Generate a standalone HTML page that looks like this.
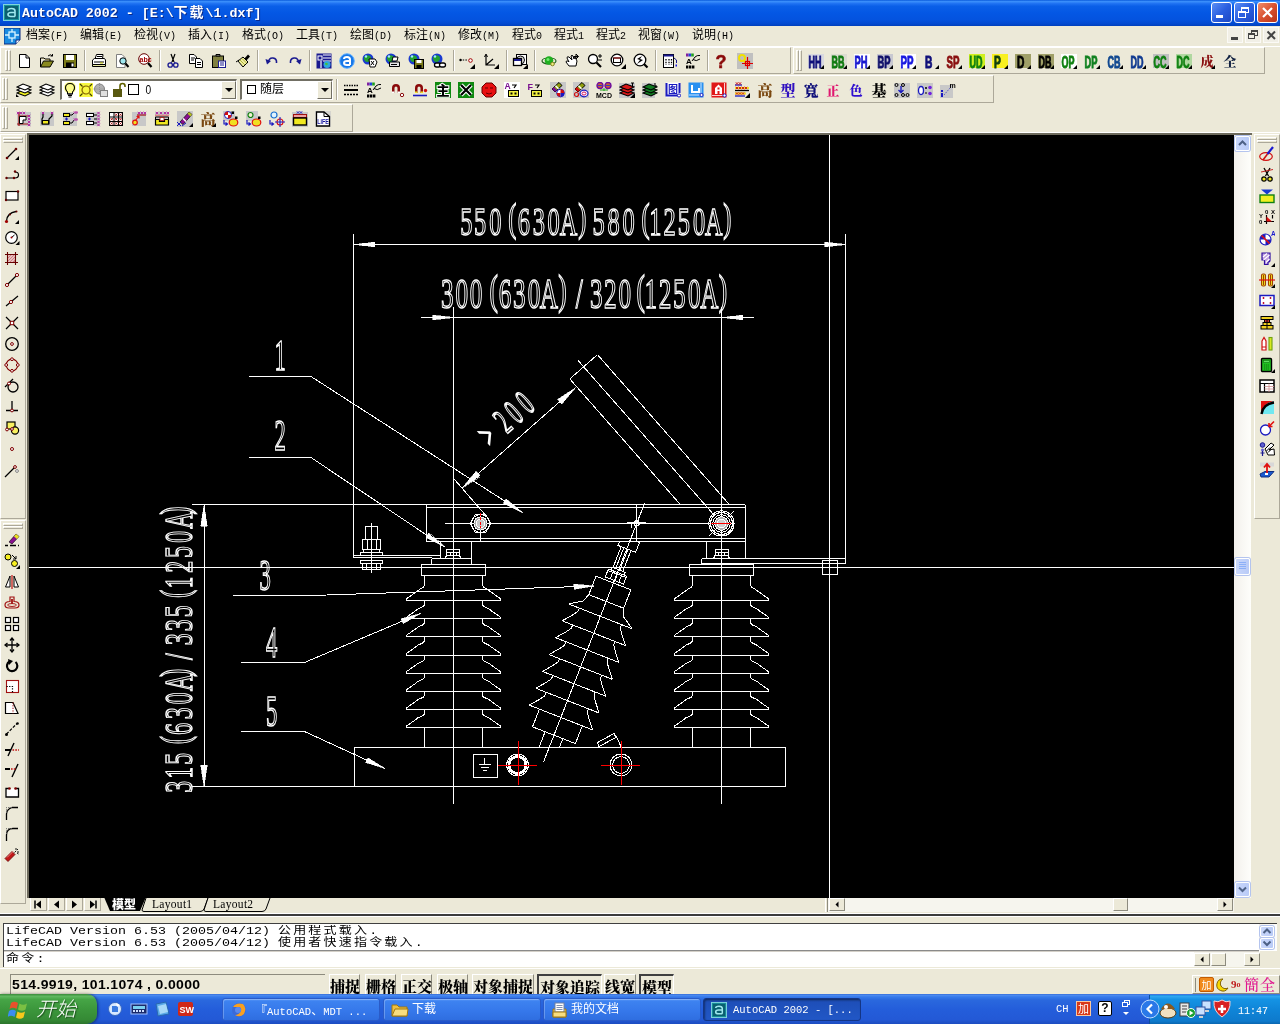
<!DOCTYPE html>
<html lang="zh"><head><meta charset="utf-8"><title>AutoCAD 2002</title><style>
html,body{margin:0;padding:0;width:1280px;height:1024px;overflow:hidden;background:#ece9d8;
 font-family:"Liberation Sans","Noto Sans CJK SC",sans-serif;font-size:12px;color:#000}
.abs{position:absolute}
#title{left:0;top:0;width:1280px;height:26px;
 background:linear-gradient(to bottom,#0a5bdc 0%,#3b8ffb 6%,#1e71f2 14%,#0a5fe8 24%,#0457e4 50%,#0453df 75%,#0349cf 92%,#0140bb 100%)}
#title .t{left:22px;top:6px;color:#fff;font-family:"Liberation Mono","Noto Sans CJK SC",monospace;font-weight:bold;font-size:13.3px;white-space:pre;line-height:16px;letter-spacing:0px;text-shadow:1px 1px 0 #0a2a8a}
#title .t b{font-size:14px;letter-spacing:2px;font-weight:bold;line-height:14px}
.wb{top:2px;width:21px;height:21px;border-radius:3px;border:1px solid #fff;box-sizing:border-box;
 background:linear-gradient(135deg,#5c8ff5 0%,#2a5fe0 50%,#1c47c4 100%)}
.wb.x{background:linear-gradient(135deg,#ee8c6a 0%,#d9512f 50%,#b8341a 100%)}
#menu{left:0;top:26px;width:1280px;height:20px;background:#ece9d8}
#menu span{position:absolute;top:3px;font-size:12px;line-height:14px;white-space:pre;font-family:"Liberation Mono","Noto Sans CJK SC",monospace}
#menu span i{font-style:normal;font-size:10px;letter-spacing:0px}
.tbar{background:#ece9d8;border-top:1px solid #fff;border-left:1px solid #fff;border-bottom:1px solid #aca899;border-right:1px solid #aca899;box-sizing:border-box}
.grip{width:3px;border-left:1px solid #fff;border-top:1px solid #fff;border-right:1px solid #aca899;border-bottom:1px solid #aca899;box-sizing:border-box}
.gripH{height:3px;border-left:1px solid #fff;border-top:1px solid #fff;border-right:1px solid #aca899;border-bottom:1px solid #aca899;box-sizing:border-box}
.sep{width:2px;border-left:1px solid #aca899;border-right:1px solid #fff;box-sizing:border-box}
.combo{background:#fff;border:1px solid #7f9db9;box-sizing:border-box;border-top:2px solid #716f64;border-left:2px solid #716f64;border-right:1px solid #fff;border-bottom:1px solid #fff}
.ddb{background:#ece9d8;border-top:1px solid #fff;border-left:1px solid #fff;border-right:1px solid #716f64;border-bottom:1px solid #716f64;box-sizing:border-box}
.ddb:after{content:"";position:absolute;left:3px;top:6px;border-left:4px solid transparent;border-right:4px solid transparent;border-top:4px solid #000}
.sbtn{background:linear-gradient(to right,#c9d7fb,#b9cbf7);border:1px solid #fff;border-radius:2px;box-sizing:border-box;box-shadow:0 0 0 1px #b4c4ee}
.strack{background:linear-gradient(to right,#f3f1ec,#fefefb)}
.stracky{background:#f6f5ee}
#cmd{left:3px;top:923px;width:1274px;height:44px;background:#fff;border-top:1px solid #404040;border-left:1px solid #404040;box-sizing:border-box}
.mono{font-family:"Liberation Mono","Noto Sans CJK SC",monospace;font-size:13.33px;white-space:pre;line-height:14px;height:14px;transform-origin:0 0;transform:scaleY(0.84)}
.mono b{font-weight:normal;font-size:13px;letter-spacing:2.2px;line-height:10px}
.stb{top:974px;height:22px;box-sizing:border-box;font-family:"Noto Serif CJK SC","Noto Sans CJK SC",serif;font-weight:900;font-size:15px;line-height:22px;text-align:center;white-space:nowrap;
 border-top:1px solid #fff;border-left:1px solid #fff;border-right:1px solid #8d8b7e;border-bottom:1px solid #8d8b7e;padding-top:0px;letter-spacing:0px}
.stb.dn{border-top:2px solid #404040;border-left:2px solid #404040;border-right:1px solid #fff;border-bottom:1px solid #fff}
#task{left:0;top:994px;width:1280px;height:30px;
 background:linear-gradient(to bottom,#3168d5 0%,#4e8cf0 4%,#3579ea 10%,#2a68de 20%,#245edb 50%,#2359d6 85%,#1c4cc0 100%)}
#start{left:0;top:0;width:97px;height:30px;border-radius:0 10px 10px 0;
 background:linear-gradient(to bottom,#3a8a3a 0%,#5fb85f 8%,#46a546 18%,#3c973c 50%,#358a35 85%,#2c742c 100%);box-shadow:1px 0 3px rgba(0,0,0,.5)}
#start span{position:absolute;left:36px;top:1px;color:#fff;font-size:20px;font-style:italic;font-family:"Noto Sans CJK SC",sans-serif;font-weight:300;line-height:26px;text-shadow:1px 1px 1px #1d4d1d;letter-spacing:0px}
.tk{top:4px;height:23px;border-radius:3px;box-sizing:border-box;color:#fff;font-size:12px;line-height:22px;white-space:pre;
 background:linear-gradient(to bottom,#5a97f6 0%,#3d82f0 12%,#3577ea 60%,#2f6ee0 100%);border:1px solid #2a5bc8;box-shadow:inset 1px 1px 0 rgba(255,255,255,.25)}
.tk.act{background:linear-gradient(to bottom,#1b459f 0%,#1e4fb9 15%,#2157c6 100%);border:1px solid #143585;box-shadow:inset 1px 1px 2px rgba(0,0,0,.4)}
.tk span{position:absolute;top:0;font-family:"Liberation Mono","Noto Sans CJK SC",monospace;font-size:12px}
.tk span i{font-style:normal;font-size:10.5px;}
#tray{left:1149px;top:1px;width:131px;height:29px;background:linear-gradient(to bottom,#1a8fe0 0%,#2ea5f0 5%,#1593e4 15%,#0f85d8 50%,#0e7acc 90%,#0a66b0 100%);border-left:1px solid #0a4fa0;box-sizing:border-box}
</style></head><body>
<div id="root" style="position:absolute;left:0;top:0;width:1280px;height:1024px;overflow:hidden;will-change:transform">
<div id="title" class="abs"><svg class="abs" style="left:3px;top:4px" width="17" height="17" viewBox="0 0 17 17"><rect x="0.5" y="0.5" width="16" height="16" fill="#18939c" stroke="#7fd4dc"/><rect x="2" y="2" width="13" height="13" fill="#0a5f70"/><path d="M5 6.5 Q5 4.5 8.5 4.5 Q12 4.5 12 7 V12.5 M12 8.5 H8 Q5 8.5 5 10.5 Q5 12.5 8 12.5 H12" fill="none" stroke="#9fe8ee" stroke-width="1.6"/></svg><div class="abs t">AutoCAD 2002 - [E:\<b>下载</b>\1.dxf]</div><div class="abs wb" style="left:1211px"><div class="abs" style="left:4px;top:12px;width:7px;height:3px;background:#fff"></div></div><div class="abs wb" style="left:1234px"><div class="abs" style="left:6px;top:4px;width:8px;height:6px;border:1px solid #fff;border-top:2px solid #fff;box-sizing:border-box"></div><div class="abs" style="left:3px;top:8px;width:8px;height:7px;border:1px solid #fff;border-top:2px solid #fff;box-sizing:border-box;background:#2a5fe0"></div></div><div class="abs wb x" style="left:1257px"><svg class="abs" style="left:3px;top:3px" width="13" height="13"><path d="M2 2 L11 11 M11 2 L2 11" stroke="#fff" stroke-width="2.2"/></svg></div></div><div id="menu" class="abs"><svg class="abs" style="left:4px;top:2px" width="17" height="17" viewBox="0 0 17 17"><path d="M0 0 H16 V12 L12 16 H0 Z" fill="#1a8be0" stroke="#0a2a80" stroke-width="1"/><path d="M12 16 V12 H16" fill="#fff" stroke="#0a2a80"/><rect x="5" y="4" width="6" height="6" fill="none" stroke="#d8f4ff" stroke-width="1.3"/><path d="M8 1 V4 M8 10 V14 M1 7 H5 M11 7 H15" stroke="#d8f4ff" stroke-width="1.3"/></svg><span style="left:26px">档案<i>(F)</i></span><span style="left:80px">编辑<i>(E)</i></span><span style="left:134px">检视<i>(V)</i></span><span style="left:188px">插入<i>(I)</i></span><span style="left:242px">格式<i>(O)</i></span><span style="left:296px">工具<i>(T)</i></span><span style="left:350px">绘图<i>(D)</i></span><span style="left:404px">标注<i>(N)</i></span><span style="left:458px">修改<i>(M)</i></span><span style="left:512px">程式<i>0</i></span><span style="left:554px">程式<i>1</i></span><span style="left:596px">程式<i>2</i></span><span style="left:638px">视窗<i>(W)</i></span><span style="left:692px">说明<i>(H)</i></span><div class="abs" style="left:1227px;top:1px;width:16px;height:16px;background:#f1efe6;border:1px solid #fbfaf6;box-sizing:border-box"></div><div class="abs" style="left:1245px;top:1px;width:16px;height:16px;background:#f1efe6;border:1px solid #fbfaf6;box-sizing:border-box"></div><div class="abs" style="left:1263px;top:1px;width:16px;height:16px;background:#f1efe6;border:1px solid #fbfaf6;box-sizing:border-box"></div><div class="abs" style="left:1231px;top:11px;width:7px;height:3px;background:#444"></div><div class="abs" style="left:1251px;top:4px;width:7px;height:6px;border:1px solid #444;border-top:2px solid #444;box-sizing:border-box"></div><div class="abs" style="left:1248px;top:7px;width:7px;height:6px;border:1px solid #444;border-top:2px solid #444;box-sizing:border-box;background:#f1efe6"></div><svg class="abs" style="left:1266px;top:4px" width="11" height="11"><path d="M1.5 1.5 L9 9 M9 1.5 L1.5 9" stroke="#444" stroke-width="2"/></svg></div><div class="abs" style="left:0;top:46px;width:1280px;height:1px;background:#fff"></div><div class="abs tbar" style="left:0;top:47px;width:791px;height:27px"></div><div class="abs grip" style="left:5px;top:50px;height:21px"></div><div class="abs grip" style="left:8px;top:50px;height:21px"></div><div class="abs tbar" style="left:793px;top:47px;width:472px;height:27px"></div><div class="abs grip" style="left:796px;top:50px;height:21px"></div><div class="abs grip" style="left:799px;top:50px;height:21px"></div><div class="abs tbar" style="left:0;top:75px;width:994px;height:28px"></div><div class="abs grip" style="left:2px;top:78px;height:22px"></div><div class="abs grip" style="left:5px;top:78px;height:22px"></div><div class="abs tbar" style="left:0;top:104px;width:353px;height:28px"></div><div class="abs grip" style="left:2px;top:107px;height:22px"></div><div class="abs grip" style="left:5px;top:107px;height:22px"></div><div class="abs sep" style="left:84px;top:50px;height:21px"></div><div class="abs sep" style="left:159px;top:50px;height:21px"></div><div class="abs sep" style="left:257px;top:50px;height:21px"></div><div class="abs sep" style="left:309px;top:50px;height:21px"></div><div class="abs sep" style="left:453px;top:50px;height:21px"></div><div class="abs sep" style="left:506px;top:50px;height:21px"></div><div class="abs sep" style="left:534px;top:50px;height:21px"></div><div class="abs sep" style="left:655px;top:50px;height:21px"></div><div class="abs sep" style="left:707px;top:50px;height:21px"></div><div class="abs sep" style="left:336px;top:79px;height:21px"></div><div class="abs combo" style="left:60px;top:79px;width:177px;height:21px"><div class="abs ddb" style="left:159px;top:0;width:15px;height:18px"></div><div class="abs" style="left:83px;top:1px;line-height:16px;font-family:'Liberation Sans',sans-serif;font-size:12px;transform:scaleX(0.85)">0</div></div><div class="abs combo" style="left:240px;top:79px;width:93px;height:21px"><div class="abs ddb" style="left:75px;top:0;width:15px;height:18px"></div><div class="abs" style="left:5px;top:4px;width:9px;height:9px;border:1px solid #000;box-sizing:border-box"></div><div class="abs" style="left:18px;top:0px;font-size:12px;line-height:17px">随层</div></div><div class="abs" style="left:0;top:132px;width:1280px;height:1px;background:#fff"></div><div class="abs" style="left:27px;top:133px;width:1225px;height:2px;background:#6d6a5c"></div><div class="abs tbar" style="left:0;top:134px;width:26px;height:385px"></div><div class="abs gripH" style="left:3px;top:137px;width:20px"></div><div class="abs gripH" style="left:3px;top:140px;width:20px"></div><div class="abs tbar" style="left:0;top:520px;width:26px;height:384px"></div><div class="abs gripH" style="left:3px;top:523px;width:20px"></div><div class="abs gripH" style="left:3px;top:526px;width:20px"></div><div class="abs" style="left:27px;top:134px;width:2px;height:764px;background:#6d6a5c"></div><div class="abs tbar" style="left:1254px;top:134px;width:26px;height:385px"></div><div class="abs gripH" style="left:1257px;top:137px;width:20px"></div><div class="abs gripH" style="left:1257px;top:140px;width:20px"></div><div class="abs strack" style="left:1234px;top:135px;width:17px;height:763px"></div><div class="abs sbtn" style="left:1235px;top:136px;width:15px;height:15px"><svg class="abs" style="left:-1px;top:-1px" width="15" height="15"><path d="M4.0 9.0 L7.5 5.5 L11.0 9.0" fill="none" stroke="#4d6185" stroke-width="2"/></svg></div><div class="abs sbtn" style="left:1235px;top:882px;width:15px;height:15px"><svg class="abs" style="left:-1px;top:-1px" width="15" height="15"><path d="M4.0 5.5 L7.5 9.0 L11.0 5.5" fill="none" stroke="#4d6185" stroke-width="2"/></svg></div><div class="abs sbtn" style="left:1235px;top:558px;width:15px;height:17px"></div><div class="abs" style="left:1239px;top:562px;width:7px;height:1px;background:#eef4fe;border-bottom:1px solid #8cb0f8;box-sizing:content-box;height:0"></div><div class="abs" style="left:1239px;top:564px;width:7px;height:1px;background:#eef4fe;border-bottom:1px solid #8cb0f8;box-sizing:content-box;height:0"></div><div class="abs" style="left:1239px;top:566px;width:7px;height:1px;background:#eef4fe;border-bottom:1px solid #8cb0f8;box-sizing:content-box;height:0"></div><div class="abs" style="left:1239px;top:568px;width:7px;height:1px;background:#eef4fe;border-bottom:1px solid #8cb0f8;box-sizing:content-box;height:0"></div><div class="abs" style="left:29px;top:898px;width:1222px;height:14px;background:#ece9d8"></div><div class="abs" style="left:30px;top:898px;width:17px;height:13px;border-right:1px solid #aca899;border-bottom:1px solid #aca899;border-left:1px solid #fff;box-sizing:border-box"></div><svg class="abs" style="left:30px;top:898px" width="17" height="13"><path d="M5 2.5 V10.5" stroke="#000" stroke-width="1.5"/><path d="M11 2.5 V10.5 L6 6.5 Z" fill="#000"/></svg><div class="abs" style="left:48px;top:898px;width:17px;height:13px;border-right:1px solid #aca899;border-bottom:1px solid #aca899;border-left:1px solid #fff;box-sizing:border-box"></div><svg class="abs" style="left:48px;top:898px" width="17" height="13"><path d="M11 2.5 V10.5 L6 6.5 Z" fill="#000"/></svg><div class="abs" style="left:66px;top:898px;width:17px;height:13px;border-right:1px solid #aca899;border-bottom:1px solid #aca899;border-left:1px solid #fff;box-sizing:border-box"></div><svg class="abs" style="left:66px;top:898px" width="17" height="13"><path d="M6 2.5 V10.5 L11 6.5 Z" fill="#000"/></svg><div class="abs" style="left:84px;top:898px;width:17px;height:13px;border-right:1px solid #aca899;border-bottom:1px solid #aca899;border-left:1px solid #fff;box-sizing:border-box"></div><svg class="abs" style="left:84px;top:898px" width="17" height="13"><path d="M12 2.5 V10.5" stroke="#000" stroke-width="1.5"/><path d="M6 2.5 V10.5 L11 6.5 Z" fill="#000"/></svg><svg class="abs" style="left:100px;top:897px" width="180" height="16" viewBox="0 0 180 16"><path d="M4 0 L10 14 H40 L46 0 Z" fill="#000"/><path d="M46 1 L42 13 Q42 14.5 44 14.5 H100 Q103 14.5 104 12 L108 1" fill="#ece9d8" stroke="#000" stroke-width="1"/><path d="M108 1 L104 13 Q104 14.5 106 14.5 H162 Q165 14.5 166 12 L170 1" fill="#ece9d8" stroke="#000" stroke-width="1"/><text x="12" y="12" font-family="Noto Sans CJK SC,sans-serif" font-weight="900" font-size="12" fill="#fff">模型</text><text x="52" y="11" font-family="Liberation Serif,serif" font-size="11.5" fill="#000" letter-spacing="0.3">Layout1</text><text x="113" y="11" font-family="Liberation Serif,serif" font-size="11.5" fill="#000" letter-spacing="0.3">Layout2</text></svg><div class="abs stracky" style="left:825px;top:897px;width:409px;height:15px"></div><div class="abs" style="left:825px;top:897px;width:3px;height:15px;background:#ece9d8;border-left:1px solid #fff;border-right:1px solid #8d8b7e;box-sizing:border-box"></div><div class="abs" style="left:829px;top:898px;width:16px;height:13px;background:#ece9d8;border:1px solid #fff;border-right-color:#8d8b7e;border-bottom-color:#8d8b7e;box-sizing:border-box"><svg class="abs" style="left:-1px;top:-1px" width="16" height="13"><path d="M9.5 3.5 L6.5 6.5 L9.5 9.5Z" fill="#000"/></svg></div><div class="abs" style="left:1217px;top:898px;width:16px;height:13px;background:#ece9d8;border:1px solid #fff;border-right-color:#8d8b7e;border-bottom-color:#8d8b7e;box-sizing:border-box"><svg class="abs" style="left:-1px;top:-1px" width="16" height="13"><path d="M6.5 3.5 L9.5 6.5 L6.5 9.5Z" fill="#000"/></svg></div><div class="abs" style="left:1113px;top:898px;width:15px;height:13px;background:#ece9d8;border:1px solid #fff;border-right-color:#8d8b7e;border-bottom-color:#8d8b7e;box-sizing:border-box"></div><div class="abs" style="left:0;top:913px;width:1280px;height:1px;background:#fff"></div><div class="abs" style="left:0;top:914px;width:1280px;height:2px;background:#3c3c3c"></div><div class="abs" style="left:0;top:916px;width:1280px;height:1px;background:#fff"></div><div id="cmd" class="abs"><div class="abs mono" style="left:2px;top:2px">LifeCAD Version 6.53 (2005/04/12) <b>公用程式载入</b>.</div><div class="abs mono" style="left:2px;top:14px">LifeCAD Version 6.53 (2005/04/12) <b>使用者快速指令载入</b>.</div><div class="abs" style="left:0;top:26px;width:1255px;height:1px;background:#8a8a8a"></div><div class="abs" style="left:0;top:27px;width:1255px;height:1px;background:#d4d0c8"></div><div class="abs mono" style="left:2px;top:30px"><b>命令</b>:</div><div class="abs strack" style="left:1255px;top:0;width:18px;height:26px"></div><div class="abs sbtn" style="left:1256px;top:2px;width:14px;height:11px"><svg class="abs" style="left:-1px;top:-1px" width="14" height="11"><path d="M3.5 7.0 L7.0 3.5 L10.5 7.0" fill="none" stroke="#4d6185" stroke-width="2"/></svg></div><div class="abs sbtn" style="left:1256px;top:14px;width:14px;height:11px"><svg class="abs" style="left:-1px;top:-1px" width="14" height="11"><path d="M3.5 3.5 L7.0 7.0 L10.5 3.5" fill="none" stroke="#4d6185" stroke-width="2"/></svg></div><div class="abs stracky" style="left:1190px;top:28px;width:66px;height:15px"></div><div class="abs" style="left:1190px;top:29px;width:16px;height:13px;background:#ece9d8;border:1px solid #fff;border-right-color:#8d8b7e;border-bottom-color:#8d8b7e;box-sizing:border-box"><svg class="abs" style="left:-1px;top:-1px" width="16" height="13"><path d="M9.5 3.5 L6.5 6.5 L9.5 9.5Z" fill="#000"/></svg></div><div class="abs" style="left:1240px;top:29px;width:16px;height:13px;background:#ece9d8;border:1px solid #fff;border-right-color:#8d8b7e;border-bottom-color:#8d8b7e;box-sizing:border-box"><svg class="abs" style="left:-1px;top:-1px" width="16" height="13"><path d="M6.5 3.5 L9.5 6.5 L6.5 9.5Z" fill="#000"/></svg></div><div class="abs" style="left:1207px;top:29px;width:15px;height:13px;background:#ece9d8;border:1px solid #fff;border-right-color:#8d8b7e;border-bottom-color:#8d8b7e;box-sizing:border-box"></div><div class="abs" style="left:1256px;top:27px;width:18px;height:17px;background:#ece9d8"></div></div><div class="abs" style="left:0;top:968px;width:1280px;height:1px;background:#fff"></div><div class="abs" style="left:10px;top:974px;width:315px;height:22px;border-top:1px solid #8d8b7e;border-left:1px solid #8d8b7e;box-sizing:border-box"></div><div class="abs" style="left:12px;top:978px;font-family:'Liberation Sans',sans-serif;font-weight:bold;font-size:14px;line-height:15px;white-space:pre;letter-spacing:0.35px;transform-origin:0 0;transform:scaleY(0.93)">514.9919, 101.1074 , 0.0000</div><div class="abs stb" style="left:329px;width:31px">捕捉</div><div class="abs stb" style="left:365px;width:31px">栅格</div><div class="abs stb" style="left:401px;width:31px">正交</div><div class="abs stb" style="left:437px;width:31px">极轴</div><div class="abs stb" style="left:472px;width:62px">对象捕捉</div><div class="abs stb dn" style="left:537px;width:65px">对象追踪</div><div class="abs stb" style="left:604px;width:32px">线宽</div><div class="abs stb dn" style="left:639px;width:35px">模型</div><div class="abs" style="left:1192px;top:975px;width:88px;height:19px;border:1px solid #8d8b7e;border-top-color:#fff;border-left-color:#fff;box-sizing:border-box;background:#ece9d8"></div><div class="abs" style="left:1195px;top:978px;width:1px;height:14px;background:#8d8b7e"></div><div class="abs" style="left:1199px;top:977px;width:15px;height:15px;background:#f08a1c;border:1px solid #c45a00;box-sizing:border-box;border-radius:2px;color:#fff;font-size:10px;line-height:13px;text-align:center;font-family:'Noto Sans CJK SC',sans-serif">加</div><svg class="abs" style="left:1214px;top:977px" width="16" height="16"><path d="M9 2 A6 6 0 1 0 14 11 A5 5 0 0 1 9 2 Z" fill="#f8d800" stroke="#806000" stroke-width="1"/></svg><div class="abs" style="left:1231px;top:977px;font-size:11px;line-height:15px;color:#c02020;font-family:'Liberation Serif',serif;font-weight:bold">9<span style="font-size:8px;vertical-align:1px">o</span></div><div class="abs" style="left:1244px;top:975px;font-size:15px;line-height:18px;color:#e01890;font-family:'Noto Serif CJK TC','Noto Serif CJK SC',serif;font-weight:500;white-space:nowrap;letter-spacing:1px">簡全</div><div id="task" class="abs"><div id="start" class="abs"><svg class="abs" style="left:8px;top:5px" width="24" height="22" viewBox="0 0 24 22"><path d="M3 4 Q6 1.5 10 4 L8.5 10 Q5 7.5 1.5 10 Z" fill="#e8502c"/><path d="M11.5 4.5 Q15 7 19 4.5 L17.5 10.5 Q14 13 10 10.5 Z" fill="#7bc043"/><path d="M1 12 Q4.5 9.5 8 12 L6.5 18 Q3 15.5 -0.5 18 Z" fill="#3c8df0"/><path d="M9.5 12.5 Q13 15 17 12.5 L15.5 18.5 Q12 21 8 18.5 Z" fill="#f8c81c"/></svg><span>开始</span></div><svg class="abs" style="left:106px;top:6px" width="100" height="18" viewBox="0 0 100 18"><circle cx="9" cy="9" r="6.5" fill="#d8e8ff" stroke="#3a6ac0"/><path d="M6 6 H12 V12 H6 Z" fill="#3a7ae0"/><path d="M10 3 L14 5 L11 7" fill="#fff"/><rect x="25" y="4" width="16" height="10" fill="#1a2a6a" stroke="#a0c0ff"/><rect x="27" y="6" width="12" height="3" fill="#7ad0f0"/><path d="M27 11 H39" stroke="#d0e0ff" stroke-width="2" stroke-dasharray="2 1"/><path d="M50 4 L60 2 L63 14 L52 16 Z" fill="#58a8e8" stroke="#2a68b0"/><path d="M52 6 L60 4 L62 12 L54 14Z" fill="#a8d8f8"/><rect x="72" y="2" width="15" height="14" rx="2" fill="#d02818"/><text x="73.5" y="13" font-size="9" font-weight="bold" fill="#fff" font-family="Liberation Sans,sans-serif">SW</text></svg><div class="abs tk" style="left:222px;width:158px"><svg class="abs" style="left:7px;top:2px" width="18" height="18"><circle cx="9" cy="9" r="7" fill="#3a6ad8"/><path d="M3 6 Q6 1 13 3 Q17 7 14 13 Q10 17 5 14 Q9 14 11 10 Q12 6 8 6 Q5 6 3 6Z" fill="#f8a020"/><circle cx="8" cy="9" r="3" fill="#5a8af0"/></svg><span style="left:32px"><span style="position:static;font-family:'Noto Sans CJK SC'">『</span><i>AutoCAD</i>、<i>MDT ...</i></span></div><div class="abs tk" style="left:383px;width:158px"><svg class="abs" style="left:7px;top:3px" width="18" height="16"><path d="M1 3 H6 L8 5 H16 V14 H1 Z" fill="#f0c040" stroke="#a07810"/><path d="M1 14 L4 7 H17 L16 14 Z" fill="#f8de80" stroke="#a07810"/></svg><span style="left:28px">下载</span></div><div class="abs tk" style="left:543px;width:158px"><svg class="abs" style="left:7px;top:2px" width="18" height="18"><path d="M2 8 H15 V16 H2 Z" fill="#f0c850" stroke="#a07810"/><rect x="4" y="2" width="9" height="9" fill="#fff" stroke="#7080a0"/><path d="M5.5 4.5 H11.5 M5.5 6.5 H11.5 M5.5 8.5 H11.5" stroke="#8090b0"/><path d="M2 11 H15 V16 H2Z" fill="#f8de80" stroke="#a07810"/></svg><span style="left:27px">我的文档</span></div><div class="abs tk act" style="left:703px;width:158px"><svg class="abs" style="left:7px;top:3px" width="16" height="16" viewBox="0 0 17 17"><rect x="0.5" y="0.5" width="16" height="16" fill="#18939c" stroke="#7fd4dc"/><rect x="2" y="2" width="13" height="13" fill="#0a5f70"/><path d="M5 6.5 Q5 4.5 8.5 4.5 Q12 4.5 12 7 V12.5 M12 8.5 H8 Q5 8.5 5 10.5 Q5 12.5 8 12.5 H12" fill="none" stroke="#9fe8ee" stroke-width="1.6"/></svg><span style="left:29px"><i>AutoCAD 2002 - [...</i></span></div><div class="abs" style="left:1056px;top:8px;color:#fff;font-family:'Liberation Mono',monospace;font-size:10.5px;line-height:14px">CH</div><div class="abs" style="left:1076px;top:7px;width:15px;height:15px;background:#d83818;border:1px solid #f8c8a0;box-sizing:border-box;color:#fff;font-size:11px;line-height:13px;text-align:center;font-family:'Noto Sans CJK SC',sans-serif">加</div><div class="abs" style="left:1098px;top:7px;width:14px;height:15px;background:#fff;border:1px solid #000;box-sizing:border-box;border-radius:2px;color:#000;font-size:12px;line-height:13px;text-align:center;font-weight:bold">?</div><svg class="abs" style="left:1120px;top:5px" width="12" height="20"><rect x="4.5" y="1.5" width="5" height="4" fill="none" stroke="#fff"/><rect x="2.5" y="3.5" width="5" height="4" fill="#245edb" stroke="#fff"/><path d="M3 13 H9 L6 16 Z" fill="#fff"/></svg><div id="tray" class="abs"><svg class="abs" style="left:-6px;top:0;overflow:visible" width="137" height="29"><circle cx="6" cy="14" r="9" fill="#2a78e8" stroke="#bcdcff"/><path d="M8 9.5 L3.5 14 L8 18.5" fill="none" stroke="#fff" stroke-width="2.2"/><ellipse cx="24" cy="18" rx="8" ry="5" fill="#f0e0c0" stroke="#5a3a10"/><path d="M17 14 Q24 3 31 14 Z" fill="#8a5a20"/><circle cx="22" cy="12" r="2" fill="#fff"/><rect x="36" y="8" width="9" height="13" fill="#e8e8e8" stroke="#404040"/><path d="M38 11 H43 M38 14 H43 M38 17 H43" stroke="#404040"/><circle cx="47" cy="18" r="4.5" fill="#18a030" stroke="#fff"/><path d="M45.5 15.5 L49.5 18 L45.5 20.5Z" fill="#fff"/><rect x="58" y="6" width="9" height="8" fill="#c8e0ff" stroke="#3050a0"/><rect x="52" y="12" width="9" height="8" fill="#c8e0ff" stroke="#3050a0"/><path d="M55 22 H59 M61 16 H65" stroke="#d0d0d0" stroke-width="2"/><path d="M78 5 Q82 8 86 6 Q87 16 78 22 Q69 16 70 6 Q74 8 78 5Z" fill="#d82020" stroke="#f8d0d0"/><path d="M78 10 V18 M74 14 H82" stroke="#fff" stroke-width="2.5"/><text x="94" y="19" font-family="Liberation Mono,monospace" font-size="10" fill="#fff">11:47</text></svg></div></div>
<svg class="abs" id="dwg" style="left:29px;top:135px;background:#000;will-change:transform" width="1205" height="763" viewBox="29 135 1205 763" shape-rendering="auto"><defs><clipPath id="cpBelowFrame"><rect x="500" y="541.5" width="300" height="100"/></clipPath><clipPath id="cpAbovePlate"><rect x="400" y="600" width="300" height="147"/></clipPath></defs><g stroke-linecap="butt" stroke-linejoin="miter" shape-rendering="crispEdges"><path d="M29 567.5 L1234 567.5" stroke="#fff" stroke-width="1" fill="none"/><path d="M829.5 135 L829.5 898" stroke="#fff" stroke-width="1" fill="none"/><path d="M822.5 560.5 L837 560.5 L837 574.5 L822.5 574.5 Z" stroke="#fff" stroke-width="1" fill="none"/><path d="M353.5 234 L353.5 557.5" stroke="#fff" stroke-width="1" fill="none"/><path d="M845.5 234 L845.5 563.5" stroke="#fff" stroke-width="1" fill="none"/><path d="M353.5 244.5 L845.5 244.5" stroke="#fff" stroke-width="1" fill="none"/><path d="M353.5 244.5 L374.5 242.1 L374.5 246.9 Z" stroke="#fff" stroke-width="0.6" fill="#fff"/><path d="M845.5 244.5 L824.5 246.9 L824.5 242.1 Z" stroke="#fff" stroke-width="0.6" fill="#fff"/><text transform="translate(460 235) scale(0.6 1)" x="0.3 23.46 48.93 80.5 96.25 121.17 145.77 166.45 197.07 209.25 220.96 245.85 270.77 302.33 315.53 339.24 362.8 388.27 408.28 438.9" y="0 0 0 -4.06 0 0 0 0 -4.06 0 0 0 0 -4.06 0 0 0 0 0 -4.06" font-family="Liberation Serif,serif" font-size="40.6" fill="none" stroke="#fff" stroke-width="1.15" style="vector-effect:non-scaling-stroke" vector-effect="non-scaling-stroke">550(630A) 580(1250A)</text><path d="M453.5 306.5 L453.5 804" stroke="#fff" stroke-width="1" fill="none"/><path d="M721.5 306.5 L721.5 804" stroke="#fff" stroke-width="1" fill="none"/><path d="M421 317.5 L754 317.5" stroke="#fff" stroke-width="1" fill="none"/><path d="M453.5 317.5 L432.5 319.9 L432.5 315.1 Z" stroke="#fff" stroke-width="0.6" fill="#fff"/><path d="M721.5 317.5 L742.5 315.1 L742.5 319.9 Z" stroke="#fff" stroke-width="0.6" fill="#fff"/><text transform="translate(440.5 308) scale(0.6 1)" x="0.81 24.92 48.58 81.59 97.06 120.81 145.42 165.28 196.18 225.41 248.98 272.56 296.75 326.59 340.16 363.9 387.43 412.42 432.78 463.68" y="0 0 0 -4.2 0 0 0 0 -4.2 0 0 0 0 -4.2 0 0 0 0 0 -4.2" font-family="Liberation Serif,serif" font-size="42" fill="none" stroke="#fff" stroke-width="1.15" style="vector-effect:non-scaling-stroke" vector-effect="non-scaling-stroke">300(630A)/320(1250A)</text><path d="M192 504.5 L745 504.5" stroke="#fff" stroke-width="1" fill="none"/><path d="M192 786.5 L785 786.5" stroke="#fff" stroke-width="1" fill="none"/><path d="M204 504.5 L204 786.5" stroke="#fff" stroke-width="1" fill="none"/><path d="M204 504.5 L207.3 526 L200.7 526 Z" stroke="#fff" stroke-width="0.6" fill="#fff"/><path d="M204 786.5 L200.7 765 L207.3 765 Z" stroke="#fff" stroke-width="0.6" fill="#fff"/><text transform="translate(191.9 791.5) rotate(-90) scale(0.6 1)" x="-1.9 21.19 44.54 79.1 94.55 120.6 145.5 167.44 191.24 219.17 243.6 266.94 290.21 323.1 338.36 364.76 389.04 414.5 437.77 461.65" y="0 0 0 -3.95 0 0 0 0 -3.95 0 0 0 0 -3.95 0 0 0 0 0 -3.95" font-family="Liberation Serif,serif" font-size="39.5" fill="none" stroke="#fff" stroke-width="1.15" style="vector-effect:non-scaling-stroke" vector-effect="non-scaling-stroke">315(630A)/335(1250A)</text><text transform="translate(274.5 369.5) scale(0.5 1)" font-family="Liberation Serif,serif" font-size="45" text-anchor="start" fill="none" stroke="#fff" stroke-width="1.25" vector-effect="non-scaling-stroke" style="vector-effect:non-scaling-stroke">1</text><path d="M248.5 376.5 L311 376.5" stroke="#fff" stroke-width="1" fill="none"/><path d="M311 376.5 L522.5 512.5" stroke="#fff" stroke-width="1" fill="none"/><path d="M522.5 512.5 L503.43 503.33 L506.24 498.96 Z" stroke="#fff" stroke-width="0.6" fill="#fff"/><text transform="translate(274.5 450) scale(0.5 1)" font-family="Liberation Serif,serif" font-size="45" text-anchor="start" fill="none" stroke="#fff" stroke-width="1.25" vector-effect="non-scaling-stroke" style="vector-effect:non-scaling-stroke">2</text><path d="M248.5 457.5 L311 457.5" stroke="#fff" stroke-width="1" fill="none"/><path d="M311 457.5 L444.5 547" stroke="#fff" stroke-width="1" fill="none"/><path d="M444.5 547 L425.61 537.47 L428.5 533.15 Z" stroke="#fff" stroke-width="0.6" fill="#fff"/><text transform="translate(259.5 590) scale(0.5 1)" font-family="Liberation Serif,serif" font-size="45" text-anchor="start" fill="none" stroke="#fff" stroke-width="1.25" vector-effect="non-scaling-stroke" style="vector-effect:non-scaling-stroke">3</text><path d="M233 595.5 L312 595.5" stroke="#fff" stroke-width="1" fill="none"/><path d="M312 595.5 L594 586" stroke="#fff" stroke-width="1" fill="none"/><path d="M594 586 L574.1 589.27 L573.92 584.07 Z" stroke="#fff" stroke-width="0.6" fill="#fff"/><text transform="translate(266 656.5) scale(0.5 1)" font-family="Liberation Serif,serif" font-size="45" text-anchor="start" fill="none" stroke="#fff" stroke-width="1.25" vector-effect="non-scaling-stroke" style="vector-effect:non-scaling-stroke">4</text><path d="M240.5 662.5 L304.5 662.5" stroke="#fff" stroke-width="1" fill="none"/><path d="M304.5 662.5 L420.5 613.5" stroke="#fff" stroke-width="1" fill="none"/><path d="M420.5 613.5 L403.09 623.68 L401.06 618.89 Z" stroke="#fff" stroke-width="0.6" fill="#fff"/><text transform="translate(266 725.5) scale(0.5 1)" font-family="Liberation Serif,serif" font-size="45" text-anchor="start" fill="none" stroke="#fff" stroke-width="1.25" vector-effect="non-scaling-stroke" style="vector-effect:non-scaling-stroke">5</text><path d="M240.5 731.5 L304.5 731.5" stroke="#fff" stroke-width="1" fill="none"/><path d="M304.5 731.5 L385 768.5" stroke="#fff" stroke-width="1" fill="none"/><path d="M385 768.5 L365.74 762.51 L367.91 757.79 Z" stroke="#fff" stroke-width="0.6" fill="#fff"/><path d="M426.5 504.5 L426.5 541.5" stroke="#fff" stroke-width="1" fill="none"/><path d="M745 504.5 L745 558.5" stroke="#fff" stroke-width="1" fill="none"/><path d="M426.5 507.5 L745 507.5" stroke="#fff" stroke-width="1" fill="none"/><path d="M432 538.5 L745 538.5" stroke="#fff" stroke-width="1" fill="none"/><path d="M426.5 541.5 L745 541.5" stroke="#fff" stroke-width="1" fill="none"/><path d="M445 523.5 L734 523.5" stroke="#fff" stroke-width="1" fill="none"/><path d="M636.5 504.5 L636.5 541.5" stroke="#fff" stroke-width="1" fill="none"/><path d="M353.5 555.5 L440 555.5" stroke="#fff" stroke-width="1" fill="none"/><path d="M353.5 557.5 L431.5 557.5" stroke="#fff" stroke-width="1" fill="none"/><path d="M440 541.5 L440 558.5" stroke="#fff" stroke-width="1" fill="none"/><path d="M471.5 541.5 L471.5 564.5" stroke="#fff" stroke-width="1" fill="none"/><path d="M431.5 558.5 L471.5 558.5" stroke="#fff" stroke-width="1" fill="none"/><path d="M431.5 558.5 L431.5 564.5" stroke="#fff" stroke-width="1" fill="none"/><path d="M446.5 549.5 L459.5 549.5 L459.5 555.5 L446.5 555.5 Z" stroke="#fff" stroke-width="1" fill="none"/><path d="M445 558 L461 558" stroke="#fff" stroke-width="1" fill="none"/><path d="M446.5 552 L459.5 552" stroke="#fff" stroke-width="1" fill="none"/><path d="M450 552 L450 556" stroke="#fff" stroke-width="1" fill="none"/><path d="M453 552 L453 556" stroke="#fff" stroke-width="1" fill="none"/><path d="M456 552 L456 556" stroke="#fff" stroke-width="1" fill="none"/><path d="M446.5 555.5 L445 558.5" stroke="#fff" stroke-width="1" fill="none"/><path d="M459.5 555.5 L461 558.5" stroke="#fff" stroke-width="1" fill="none"/><path d="M706.5 541.5 L706.5 558.5" stroke="#fff" stroke-width="1" fill="none"/><path d="M701.5 558.5 L845.5 558.5" stroke="#fff" stroke-width="1" fill="none"/><path d="M701.5 563.5 L845.5 563.5" stroke="#fff" stroke-width="1" fill="none"/><path d="M701.5 558.5 L701.5 564.5" stroke="#fff" stroke-width="1" fill="none"/><path d="M715 549.5 L728 549.5 L728 555.5 L715 555.5 Z" stroke="#fff" stroke-width="1" fill="none"/><path d="M713.5 558 L729.5 558" stroke="#fff" stroke-width="1" fill="none"/><path d="M715 552 L728 552" stroke="#fff" stroke-width="1" fill="none"/><path d="M718.5 552 L718.5 556" stroke="#fff" stroke-width="1" fill="none"/><path d="M721.5 552 L721.5 556" stroke="#fff" stroke-width="1" fill="none"/><path d="M724.5 552 L724.5 556" stroke="#fff" stroke-width="1" fill="none"/><path d="M715 555.5 L713.5 558.5" stroke="#fff" stroke-width="1" fill="none"/><path d="M728 555.5 L729.5 558.5" stroke="#fff" stroke-width="1" fill="none"/><path d="M480.5 527 L480.5 541.5" stroke="#fff" stroke-width="1" fill="none"/><path d="M490.9 523.5 L485.7 532.51 L475.3 532.51 L470.1 523.5 L475.3 514.49 L485.7 514.49 Z" stroke="#fff" stroke-width="1" fill="none"/><circle cx="480.5" cy="523.5" r="9" stroke="#fff" stroke-width="1" fill="none"/><circle cx="480.5" cy="523.5" r="6.6" stroke="#fff" stroke-width="1" fill="#a8a8a8"/><circle cx="480.5" cy="523.5" r="4.2" stroke="#fff" stroke-width="1" fill="#c8c8c8"/><path d="M480.5 512.5 V528" stroke="#ff0000" stroke-dasharray="3 1.5" fill="none"/><circle cx="721.5" cy="523.5" r="12.6" stroke="#fff" stroke-width="1" fill="none"/><circle cx="721.5" cy="523.5" r="11" stroke="#fff" stroke-width="1" fill="none"/><circle cx="721.5" cy="523.5" r="8.8" stroke="#fff" stroke-width="1" fill="none"/><circle cx="721.5" cy="523.5" r="6.8" stroke="#fff" stroke-width="1" fill="#b0b0b0"/><circle cx="721.5" cy="523.5" r="4.2" stroke="#fff" stroke-width="1" fill="#d0d0d0"/><path d="M727.16 517.84 L733.52 511.48" stroke="#fff" stroke-width="1" fill="none"/><path d="M715.84 529.16 L709.48 535.52" stroke="#fff" stroke-width="1" fill="none"/><path d="M711 523.5 L731 523.5" stroke="#ff0000" stroke-width="1" fill="none"/><path d="M371.5 523 L371.5 572.5" stroke="#fff" stroke-width="1" fill="none"/><path d="M365.5 526.5 L377 526.5 L377 539.5 L365.5 539.5 Z" stroke="#fff" stroke-width="1" fill="none"/><path d="M362.5 539.5 L380.5 539.5 L380.5 549.5 L362.5 549.5 Z" stroke="#fff" stroke-width="1" fill="none"/><path d="M367 539.5 L367 549.5" stroke="#fff" stroke-width="1" fill="none"/><path d="M376 539.5 L376 549.5" stroke="#fff" stroke-width="1" fill="none"/><path d="M363.5 549.5 L379.5 549.5 L379.5 552.5 L363.5 552.5 Z" stroke="#fff" stroke-width="1" fill="none"/><path d="M360 552.5 L382.5 552.5 L382.5 555.5 L360 555.5 Z" stroke="#fff" stroke-width="1" fill="none"/><path d="M360 560.5 L382.5 560.5 L382.5 563 L360 563 Z" stroke="#fff" stroke-width="1" fill="none"/><path d="M362 563 L380.5 563 L380.5 569.5 L362 569.5 Z" stroke="#fff" stroke-width="1" fill="none"/><path d="M366.5 563 L366.5 569.5" stroke="#fff" stroke-width="1" fill="none"/><path d="M376 563 L376 569.5" stroke="#fff" stroke-width="1" fill="none"/><path d="M421.2 564.4 L485.8 564.4 L485.8 575.6 L421.2 575.6 Z" stroke="#fff" stroke-width="1" fill="none"/><path d="M424.7 575.6 L424.7 584.5 Q424.2 587.5 420.2 589 L406.2 599 L406.2 600.6" stroke="#fff" fill="none"/><path d="M424.7 600.6 L424.7 604.1 Q424.2 606.6 420.7 607.6 Q417.7 608.6 415.2 611.1 L406.2 617.35 L406.2 618.75" stroke="#fff" fill="none"/><path d="M424.7 618.75 L424.7 622.25 Q424.2 624.75 420.7 625.75 Q417.7 626.75 415.2 629.25 L406.2 635.5 L406.2 636.9" stroke="#fff" fill="none"/><path d="M424.7 636.9 L424.7 640.4 Q424.2 642.9 420.7 643.9 Q417.7 644.9 415.2 647.4 L406.2 653.65 L406.2 655.05" stroke="#fff" fill="none"/><path d="M424.7 655.05 L424.7 658.55 Q424.2 661.05 420.7 662.05 Q417.7 663.05 415.2 665.55 L406.2 671.8 L406.2 673.2" stroke="#fff" fill="none"/><path d="M424.7 673.2 L424.7 676.7 Q424.2 679.2 420.7 680.2 Q417.7 681.2 415.2 683.7 L406.2 689.95 L406.2 691.35" stroke="#fff" fill="none"/><path d="M424.7 691.35 L424.7 694.85 Q424.2 697.35 420.7 698.35 Q417.7 699.35 415.2 701.85 L406.2 708.1 L406.2 709.5" stroke="#fff" fill="none"/><path d="M424.7 709.5 L424.7 713 Q424.2 715.5 420.7 716.5 Q417.7 717.5 415.2 720 L406.2 726.25 L406.2 727.65" stroke="#fff" fill="none"/><path d="M482.3 575.6 L482.3 584.5 Q482.8 587.5 486.8 589 L500.8 599 L500.8 600.6" stroke="#fff" fill="none"/><path d="M482.3 600.6 L482.3 604.1 Q482.8 606.6 486.3 607.6 Q489.3 608.6 491.8 611.1 L500.8 617.35 L500.8 618.75" stroke="#fff" fill="none"/><path d="M482.3 618.75 L482.3 622.25 Q482.8 624.75 486.3 625.75 Q489.3 626.75 491.8 629.25 L500.8 635.5 L500.8 636.9" stroke="#fff" fill="none"/><path d="M482.3 636.9 L482.3 640.4 Q482.8 642.9 486.3 643.9 Q489.3 644.9 491.8 647.4 L500.8 653.65 L500.8 655.05" stroke="#fff" fill="none"/><path d="M482.3 655.05 L482.3 658.55 Q482.8 661.05 486.3 662.05 Q489.3 663.05 491.8 665.55 L500.8 671.8 L500.8 673.2" stroke="#fff" fill="none"/><path d="M482.3 673.2 L482.3 676.7 Q482.8 679.2 486.3 680.2 Q489.3 681.2 491.8 683.7 L500.8 689.95 L500.8 691.35" stroke="#fff" fill="none"/><path d="M482.3 691.35 L482.3 694.85 Q482.8 697.35 486.3 698.35 Q489.3 699.35 491.8 701.85 L500.8 708.1 L500.8 709.5" stroke="#fff" fill="none"/><path d="M482.3 709.5 L482.3 713 Q482.8 715.5 486.3 716.5 Q489.3 717.5 491.8 720 L500.8 726.25 L500.8 727.65" stroke="#fff" fill="none"/><path d="M406.2 600.6 L500.8 600.6" stroke="#fff" stroke-width="1" fill="none"/><path d="M406.2 618.75 L500.8 618.75" stroke="#fff" stroke-width="1" fill="none"/><path d="M406.2 636.9 L500.8 636.9" stroke="#fff" stroke-width="1" fill="none"/><path d="M406.2 655.05 L500.8 655.05" stroke="#fff" stroke-width="1" fill="none"/><path d="M406.2 673.2 L500.8 673.2" stroke="#fff" stroke-width="1" fill="none"/><path d="M406.2 691.35 L500.8 691.35" stroke="#fff" stroke-width="1" fill="none"/><path d="M406.2 709.5 L500.8 709.5" stroke="#fff" stroke-width="1" fill="none"/><path d="M406.2 727.65 L500.8 727.65" stroke="#fff" stroke-width="1" fill="none"/><path d="M424.2 727.65 L424.2 747" stroke="#fff" stroke-width="1" fill="none"/><path d="M482.8 727.65 L482.8 747" stroke="#fff" stroke-width="1" fill="none"/><path d="M689.2 564.4 L753.8 564.4 L753.8 575.6 L689.2 575.6 Z" stroke="#fff" stroke-width="1" fill="none"/><path d="M692.7 575.6 L692.7 584.5 Q692.2 587.5 688.2 589 L674.2 599 L674.2 600.6" stroke="#fff" fill="none"/><path d="M692.7 600.6 L692.7 604.1 Q692.2 606.6 688.7 607.6 Q685.7 608.6 683.2 611.1 L674.2 617.35 L674.2 618.75" stroke="#fff" fill="none"/><path d="M692.7 618.75 L692.7 622.25 Q692.2 624.75 688.7 625.75 Q685.7 626.75 683.2 629.25 L674.2 635.5 L674.2 636.9" stroke="#fff" fill="none"/><path d="M692.7 636.9 L692.7 640.4 Q692.2 642.9 688.7 643.9 Q685.7 644.9 683.2 647.4 L674.2 653.65 L674.2 655.05" stroke="#fff" fill="none"/><path d="M692.7 655.05 L692.7 658.55 Q692.2 661.05 688.7 662.05 Q685.7 663.05 683.2 665.55 L674.2 671.8 L674.2 673.2" stroke="#fff" fill="none"/><path d="M692.7 673.2 L692.7 676.7 Q692.2 679.2 688.7 680.2 Q685.7 681.2 683.2 683.7 L674.2 689.95 L674.2 691.35" stroke="#fff" fill="none"/><path d="M692.7 691.35 L692.7 694.85 Q692.2 697.35 688.7 698.35 Q685.7 699.35 683.2 701.85 L674.2 708.1 L674.2 709.5" stroke="#fff" fill="none"/><path d="M692.7 709.5 L692.7 713 Q692.2 715.5 688.7 716.5 Q685.7 717.5 683.2 720 L674.2 726.25 L674.2 727.65" stroke="#fff" fill="none"/><path d="M750.3 575.6 L750.3 584.5 Q750.8 587.5 754.8 589 L768.8 599 L768.8 600.6" stroke="#fff" fill="none"/><path d="M750.3 600.6 L750.3 604.1 Q750.8 606.6 754.3 607.6 Q757.3 608.6 759.8 611.1 L768.8 617.35 L768.8 618.75" stroke="#fff" fill="none"/><path d="M750.3 618.75 L750.3 622.25 Q750.8 624.75 754.3 625.75 Q757.3 626.75 759.8 629.25 L768.8 635.5 L768.8 636.9" stroke="#fff" fill="none"/><path d="M750.3 636.9 L750.3 640.4 Q750.8 642.9 754.3 643.9 Q757.3 644.9 759.8 647.4 L768.8 653.65 L768.8 655.05" stroke="#fff" fill="none"/><path d="M750.3 655.05 L750.3 658.55 Q750.8 661.05 754.3 662.05 Q757.3 663.05 759.8 665.55 L768.8 671.8 L768.8 673.2" stroke="#fff" fill="none"/><path d="M750.3 673.2 L750.3 676.7 Q750.8 679.2 754.3 680.2 Q757.3 681.2 759.8 683.7 L768.8 689.95 L768.8 691.35" stroke="#fff" fill="none"/><path d="M750.3 691.35 L750.3 694.85 Q750.8 697.35 754.3 698.35 Q757.3 699.35 759.8 701.85 L768.8 708.1 L768.8 709.5" stroke="#fff" fill="none"/><path d="M750.3 709.5 L750.3 713 Q750.8 715.5 754.3 716.5 Q757.3 717.5 759.8 720 L768.8 726.25 L768.8 727.65" stroke="#fff" fill="none"/><path d="M674.2 600.6 L768.8 600.6" stroke="#fff" stroke-width="1" fill="none"/><path d="M674.2 618.75 L768.8 618.75" stroke="#fff" stroke-width="1" fill="none"/><path d="M674.2 636.9 L768.8 636.9" stroke="#fff" stroke-width="1" fill="none"/><path d="M674.2 655.05 L768.8 655.05" stroke="#fff" stroke-width="1" fill="none"/><path d="M674.2 673.2 L768.8 673.2" stroke="#fff" stroke-width="1" fill="none"/><path d="M674.2 691.35 L768.8 691.35" stroke="#fff" stroke-width="1" fill="none"/><path d="M674.2 709.5 L768.8 709.5" stroke="#fff" stroke-width="1" fill="none"/><path d="M674.2 727.65 L768.8 727.65" stroke="#fff" stroke-width="1" fill="none"/><path d="M692.2 727.65 L692.2 747" stroke="#fff" stroke-width="1" fill="none"/><path d="M750.8 727.65 L750.8 747" stroke="#fff" stroke-width="1" fill="none"/><path d="M354.5 747 L785 747 L785 786.5 L354.5 786.5 Z" stroke="#fff" stroke-width="1" fill="none"/><path d="M473 754 L497 754 L497 777.5 L473 777.5 Z" stroke="#fff" stroke-width="1" fill="none"/><path d="M484.5 757.5 L484.5 764.5" stroke="#fff" stroke-width="1" fill="none"/><path d="M479 764.5 L490.5 764.5" stroke="#fff" stroke-width="1.3" fill="none"/><path d="M481 767.5 L488.5 767.5" stroke="#fff" stroke-width="1.3" fill="none"/><path d="M483 770.5 L486.5 770.5" stroke="#fff" stroke-width="1.3" fill="none"/><circle cx="517.5" cy="765" r="10.9" stroke="#fff" stroke-width="1" fill="none"/><circle cx="517.5" cy="765" r="8.4" stroke="#fff" stroke-width="1" fill="none"/><circle cx="517.5" cy="765" r="9.4" stroke="#fff" stroke-width="1" fill="none"/><circle cx="517.5" cy="765" r="7.6" stroke="#fff" stroke-width="1" fill="none"/><path d="M497.5 765.5 L536.5 765.5" stroke="#ff0000" stroke-width="1" fill="none"/><path d="M518 741 L518 785" stroke="#ff0000" stroke-width="1" fill="none"/><circle cx="621" cy="765" r="10.9" stroke="#fff" stroke-width="1" fill="none"/><circle cx="621" cy="765" r="8.4" stroke="#fff" stroke-width="1" fill="none"/><path d="M601 765.5 L640 765.5" stroke="#ff0000" stroke-width="1" fill="none"/><path d="M621.5 741 L621.5 785" stroke="#ff0000" stroke-width="1" fill="none"/><path d="M599 746.5 L597.5 742.5 L614 733.5 L616 737.5" stroke="#fff" stroke-width="1" fill="none"/><path d="M599 746.5 L616 737.5" stroke="#fff" stroke-width="1" fill="none"/><path d="M614 733.5 Q619 740 621 747" stroke="#fff" fill="none"/><path d="M628 761.5 L628 763" stroke="#fff" stroke-width="1" fill="none"/><path d="M569.84 378.96 L680.28 504.5" stroke="#fff" stroke-width="1" fill="none"/><path d="M597.47 354.65 L729.29 504.5" stroke="#fff" stroke-width="1" fill="none"/><path d="M569.84 378.96 L597.47 354.65" stroke="#fff" stroke-width="1" fill="none"/><path d="M578.17 360.58 L713.57 514.49" stroke="#fff" stroke-width="1" fill="none"/><path d="M462.5 487.5 L575.5 387.8" stroke="#fff" stroke-width="1" fill="none"/><path d="M575.5 387.8 L561.8 404.02 L557.7 399.37 Z" stroke="#fff" stroke-width="0.6" fill="#fff"/><path d="M462.5 487.5 L476.2 471.28 L480.3 475.93 Z" stroke="#fff" stroke-width="0.6" fill="#fff"/><path d="M454.5 479.5 L481 510" stroke="#fff" stroke-width="1" fill="none"/><path d="M481 510 L489 519" stroke="#fff" stroke-width="1" fill="none"/><text transform="translate(491.8 447.4) rotate(-41.4) scale(0.52 1)" x="-1.85 38.79 66.89 95.74" y="0 0 0 0" font-family="Liberation Serif,serif" font-size="36.3" fill="none" stroke="#fff" stroke-width="1.25" style="vector-effect:non-scaling-stroke" vector-effect="non-scaling-stroke">&gt;200</text><path d="M644.63 503.17 L543.45 762.11" stroke="#fff" stroke-width="1" fill="none"/><circle cx="636.8" cy="523.2" r="2.6" stroke="#fff" stroke-width="1" fill="none"/><path d="M626.8 523.2 L645.8 523.2" stroke="#fff" stroke-width="1.6" fill="none"/><path d="M631.8 524.2 L631.8 528.2" stroke="#fff" stroke-width="1" fill="none"/><g clip-path="url(#cpBelowFrame)"><path d="M621.76 535.58 L639.46 542.49 L635.64 552.27 L617.94 545.36 Z" stroke="#fff" stroke-width="1" fill="none"/></g><path d="M621.2 546.63 L613.01 567.59" stroke="#fff" stroke-width="1" fill="none"/><path d="M623.81 547.65 L615.62 568.61" stroke="#fff" stroke-width="1" fill="none"/><path d="M627.91 549.25 L619.72 570.21" stroke="#fff" stroke-width="1" fill="none"/><path d="M630.98 550.45 L622.79 571.41" stroke="#fff" stroke-width="1" fill="none"/><path d="M612.08 567.22 L625.12 572.32 L624.03 575.11 L610.99 570.02 Z" stroke="#fff" stroke-width="1" fill="none"/><path d="M608.38 569 L626.64 576.13 L623.54 584.05 L605.29 576.92 Z" stroke="#fff" stroke-width="1" fill="none"/><path d="M612.77 572.32 L610.23 578.84" stroke="#fff" stroke-width="1" fill="none"/><path d="M617.43 574.14 L614.88 580.66" stroke="#fff" stroke-width="1" fill="none"/><path d="M621.44 575.71 L618.89 582.23" stroke="#fff" stroke-width="1" fill="none"/><path d="M607.84 570.4 L626.09 577.53" stroke="#fff" stroke-width="1" fill="none"/><path d="M588.81 594.63 L596.02 576.19 L630.85 589.8 L623.65 608.24" stroke="#fff" stroke-width="1" fill="none"/><path d="M588.81 594.63 L623.65 608.24" stroke="#fff" stroke-width="1" fill="none"/><path d="M588.81 594.63 L583.1 600.99 L568.74 603.97" stroke="#fff" stroke-width="1" fill="none"/><path d="M579.45 608.15 L577.53 611.7 L572.45 615.08 L562.15 620.83" stroke="#fff" stroke-width="1" fill="none"/><path d="M572.86 625.01 L570.94 628.55 L565.86 631.94 L555.56 637.68" stroke="#fff" stroke-width="1" fill="none"/><path d="M566.27 641.87 L564.35 645.41 L559.27 648.8 L548.97 654.54" stroke="#fff" stroke-width="1" fill="none"/><path d="M559.68 658.73 L557.76 662.27 L552.68 665.66 L542.39 671.4" stroke="#fff" stroke-width="1" fill="none"/><path d="M553.1 675.59 L551.18 679.13 L546.1 682.51 L535.8 688.26" stroke="#fff" stroke-width="1" fill="none"/><path d="M546.51 692.45 L544.59 695.99 L539.51 699.37 L529.21 705.12" stroke="#fff" stroke-width="1" fill="none"/><path d="M623.65 608.24 L623.53 616.79 L632.07 628.72" stroke="#fff" stroke-width="1" fill="none"/><path d="M621.36 624.53 L620.37 628.44 L621.81 634.37 L625.48 645.57" stroke="#fff" stroke-width="1" fill="none"/><path d="M614.77 641.39 L613.78 645.3 L615.22 651.23 L618.9 662.43" stroke="#fff" stroke-width="1" fill="none"/><path d="M608.19 658.25 L607.2 662.16 L608.64 668.09 L612.31 679.29" stroke="#fff" stroke-width="1" fill="none"/><path d="M601.6 675.11 L600.61 679.01 L602.05 684.95 L605.72 696.15" stroke="#fff" stroke-width="1" fill="none"/><path d="M595.01 691.97 L594.02 695.87 L595.46 701.8 L599.13 713.01" stroke="#fff" stroke-width="1" fill="none"/><path d="M588.42 708.82 L587.43 712.73 L588.87 718.66 L592.55 729.87" stroke="#fff" stroke-width="1" fill="none"/><path d="M568.74 603.97 L632.07 628.72" stroke="#fff" stroke-width="1" fill="none"/><path d="M562.15 620.83 L625.48 645.57" stroke="#fff" stroke-width="1" fill="none"/><path d="M555.56 637.68 L618.9 662.43" stroke="#fff" stroke-width="1" fill="none"/><path d="M548.97 654.54 L612.31 679.29" stroke="#fff" stroke-width="1" fill="none"/><path d="M542.39 671.4 L605.72 696.15" stroke="#fff" stroke-width="1" fill="none"/><path d="M535.8 688.26 L599.13 713.01" stroke="#fff" stroke-width="1" fill="none"/><path d="M529.21 705.12 L592.55 729.87" stroke="#fff" stroke-width="1" fill="none"/><path d="M539.46 709.12 L532.54 726.82 L575.39 743.56 L582.3 725.86" stroke="#fff" stroke-width="1" fill="none"/><g clip-path="url(#cpAbovePlate)"><path d="M545.12 731.73 L537.47 751.29" stroke="#fff" stroke-width="1" fill="none"/><path d="M562.81 738.65 L555.17 758.21" stroke="#fff" stroke-width="1" fill="none"/></g></g></svg>
<svg class="abs" style="left:16px;top:53px" width="16" height="16" viewBox="0 0 16 16"><path d="M3.5 1.5 H10 L13.5 5 V14.5 H3.5 Z" fill="#fff" stroke="#000"/><path d="M10 1.5 V5 H13.5" fill="none" stroke="#000"/></svg><svg class="abs" style="left:39px;top:53px" width="16" height="16" viewBox="0 0 16 16"><path d="M1.5 5 H5 L6 6 H11 V8" fill="#f0e090" stroke="#000"/><path d="M1.5 5 V14 H11 L14.5 8 H4.5 L1.5 14" fill="#8a8a20" stroke="#000"/><path d="M9 3 Q11.5 0.5 13.5 3 M13.5 3 l0 -2 M13.5 3 l-2 0" stroke="#000" fill="none"/></svg><svg class="abs" style="left:62px;top:53px" width="16" height="16" viewBox="0 0 16 16"><rect x="1.5" y="1.5" width="13" height="13" fill="#7a7a18" stroke="#000"/><rect x="4" y="2" width="8" height="5" fill="#fff"/><rect x="4" y="9.5" width="8" height="5" fill="#000"/><rect x="9.5" y="10.5" width="2" height="3" fill="#fff"/></svg><svg class="abs" style="left:91px;top:53px" width="16" height="16" viewBox="0 0 16 16"><path d="M4 6 L5.5 1.5 H12 L11.5 6" fill="#fff" stroke="#000"/><path d="M1.5 7 L3.5 5.5 H13.5 L14.5 7 V11.5 H1.5 Z" fill="#fff" stroke="#000"/><path d="M1.5 11.5 H14.5 V13.5 H1.5Z" fill="#e8e8a0" stroke="#000"/><path d="M6 3.5 H11 M3 9 H13" stroke="#000"/><rect x="9" y="9.5" width="3" height="1" fill="#c8c800"/></svg><svg class="abs" style="left:114px;top:53px" width="16" height="16" viewBox="0 0 16 16"><path d="M2.5 1.5 H8 L11 4.5 V14.5 H2.5Z" fill="#fff" stroke="#808080"/><circle cx="9" cy="8" r="3.2" fill="#a0e8f0" stroke="#000"/><path d="M11.5 10.5 L14.5 14" stroke="#000" stroke-width="2"/></svg><svg class="abs" style="left:137px;top:53px" width="16" height="16" viewBox="0 0 16 16"><circle cx="7" cy="6" r="5.3" fill="#fff" stroke="#600"/><path d="M11 10 L14.5 14" stroke="#000" stroke-width="2.2"/><text x="2.6" y="8.5" font-family="Liberation Sans,sans-serif" font-weight="bold" font-size="7" fill="#a00000">abc</text></svg><svg class="abs" style="left:165px;top:53px" width="16" height="16" viewBox="0 0 16 16"><path d="M6 1 L9 9 M10 1 L7 9" stroke="#000" stroke-width="1.2"/><circle cx="5.2" cy="12" r="2.2" fill="none" stroke="#1a1a90" stroke-width="1.3"/><circle cx="10.8" cy="12" r="2.2" fill="none" stroke="#1a1a90" stroke-width="1.3"/><path d="M7 9 L5.5 10 M9 9 L10.5 10" stroke="#1a1a90"/></svg><svg class="abs" style="left:188px;top:53px" width="16" height="16" viewBox="0 0 16 16"><path d="M1.5 1.5 H6 L8.5 4 V10.5 H1.5Z" fill="#fff" stroke="#000"/><path d="M7.5 5.5 H12 L14.5 8 V14.5 H7.5Z" fill="#fff" stroke="#000"/><path d="M3 5 H7 M3 7 H6 M9 9.5 H13 M9 11.5 H13" stroke="#000"/></svg><svg class="abs" style="left:211px;top:53px" width="16" height="16" viewBox="0 0 16 16"><rect x="1.5" y="3" width="11" height="11.5" fill="#808040" stroke="#000"/><path d="M5 3 V1.5 H9 V3Z" fill="#c0c0c0" stroke="#000"/><rect x="7.5" y="8" width="7" height="6.5" fill="#fff" stroke="#1a1a90"/><path d="M9 10 H13 M9 12 H13" stroke="#1a1a90"/></svg><svg class="abs" style="left:235px;top:53px" width="16" height="16" viewBox="0 0 16 16"><path d="M9 6 L13 1.5 L15 3.5 L11 8Z" fill="#000"/><path d="M3 8 L8 4 L13 9 L8 14 Z" fill="#f0f0a0" stroke="#000"/><path d="M1 9 L4 7" stroke="#000"/><path d="M5 7 L10 12 M7 5.5 L12 10.5" stroke="#b0b040"/></svg><svg class="abs" style="left:264px;top:53px" width="16" height="16" viewBox="0 0 16 16"><path d="M4 10 Q5 4.5 9 5 Q13 5.5 12.5 10" fill="none" stroke="#1a1a90" stroke-width="1.6"/><path d="M1.5 6 L7 8 L3 11.5Z" fill="#1a1a90"/></svg><svg class="abs" style="left:287px;top:53px" width="16" height="16" viewBox="0 0 16 16"><path d="M12 10 Q11 4.5 7 5 Q3 5.5 3.5 10" fill="none" stroke="#1a1a90" stroke-width="1.6"/><path d="M14.5 6 L9 8 L13 11.5Z" fill="#1a1a90"/></svg><svg class="abs" style="left:316px;top:53px" width="16" height="16" viewBox="0 0 16 16"><rect x="0.5" y="0.5" width="15" height="15" fill="#1a1a90"/><rect x="2" y="3" width="4" height="4" fill="none" stroke="#fff"/><path d="M7 2 H15 M7 5 H15 M5 8 V15 M7 8 H15" stroke="#fff" stroke-width="1.2"/><circle cx="11" cy="11.5" r="3.5" fill="#30a8e0"/><path d="M9 10 Q11 9 12 11 Q11 13 9.5 12Z" fill="#40c040"/></svg><svg class="abs" style="left:339px;top:53px" width="16" height="16" viewBox="0 0 16 16"><circle cx="8" cy="8" r="7.3" fill="#1878e8"/><circle cx="8" cy="8" r="7.3" fill="none" stroke="#60b0ff"/><path d="M5 6 Q5 4 8 4 Q11 4 11 6.5 V12 M11 8 H8 Q5 8 5 10 Q5 12 8 12 H11" fill="none" stroke="#fff" stroke-width="2"/></svg><svg class="abs" style="left:362px;top:53px" width="16" height="16" viewBox="0 0 16 16"><circle cx="6" cy="6" r="5.5" fill="#1a3ad0"/><path d="M2 4 Q5 1 8 3 Q10 5 8 8 Q5 10 3 8 Q1.5 6 2 4Z" fill="#20a030"/><circle cx="4" cy="3.5" r="1.2" fill="#a0e8ff"/><path d="M7 6 H13 L15 9 L13 14 H8 Z" fill="#fff" stroke="#000"/><path d="M9 8 L12 12 M12 8 L9 12" stroke="#000"/></svg><svg class="abs" style="left:385px;top:53px" width="16" height="16" viewBox="0 0 16 16"><circle cx="6" cy="6" r="5.5" fill="#1a3ad0"/><path d="M2 4 Q5 1 8 3 Q10 5 8 8 Q5 10 3 8 Q1.5 6 2 4Z" fill="#20a030"/><circle cx="4" cy="3.5" r="1.2" fill="#a0e8ff"/><path d="M8 4 H13 L12 8 H7Z" fill="#fff" stroke="#000"/><path d="M4.5 9 H14.5 V13.5 H4.5Z" fill="#e8e8e8" stroke="#000"/><path d="M6 11.5 H12" stroke="#000"/></svg><svg class="abs" style="left:408px;top:53px" width="16" height="16" viewBox="0 0 16 16"><circle cx="6" cy="6" r="5.5" fill="#1a3ad0"/><path d="M2 4 Q5 1 8 3 Q10 5 8 8 Q5 10 3 8 Q1.5 6 2 4Z" fill="#20a030"/><circle cx="4" cy="3.5" r="1.2" fill="#a0e8ff"/><rect x="6.5" y="6.5" width="9" height="9" fill="#7a7a18" stroke="#000"/><rect x="8.5" y="7" width="5" height="3" fill="#fff"/><rect x="8.5" y="12" width="5" height="3.5" fill="#000"/></svg><svg class="abs" style="left:431px;top:53px" width="16" height="16" viewBox="0 0 16 16"><circle cx="6" cy="6" r="5.5" fill="#1a3ad0"/><path d="M2 4 Q5 1 8 3 Q10 5 8 8 Q5 10 3 8 Q1.5 6 2 4Z" fill="#20a030"/><circle cx="4" cy="3.5" r="1.2" fill="#a0e8ff"/><rect x="3.5" y="10" width="6" height="4" rx="2" fill="#fff" stroke="#000" stroke-width="1.3"/><rect x="8.5" y="10" width="6" height="4" rx="2" fill="#fff" stroke="#000" stroke-width="1.3"/></svg><svg class="abs" style="left:459px;top:53px" width="16" height="16" viewBox="0 0 16 16"><path d="M1 7 H9" stroke="#000" stroke-width="1.2" stroke-dasharray="1.5 1.2"/><circle cx="1.5" cy="7" r="1.2" fill="#000"/><circle cx="11.5" cy="7.5" r="1.8" fill="#fff" stroke="#a00000"/><path d="M16 11 V16 H11 Z" fill="#000"/></svg><svg class="abs" style="left:483px;top:53px" width="16" height="16" viewBox="0 0 16 16"><path d="M3 2 V12 H12 M3 12 L10 6" fill="none" stroke="#000" stroke-width="1.2"/><path d="M1.5 4 L3 1 L4.5 4" fill="none" stroke="#000"/><path d="M16 11 V16 H11 Z" fill="#000"/></svg><svg class="abs" style="left:512px;top:53px" width="16" height="16" viewBox="0 0 16 16"><rect x="4.5" y="1.5" width="10" height="10" fill="#fff" stroke="#000"/><circle cx="8.5" cy="7" r="4" fill="#e8e8e8" stroke="#000"/><rect x="1.5" y="5.5" width="8" height="7" fill="#fff" stroke="#000" stroke-width="1.3"/><rect x="2" y="6" width="7" height="2" fill="#1a1a90"/><path d="M16 11 V16 H11 Z" fill="#000"/></svg><svg class="abs" style="left:541px;top:53px" width="16" height="16" viewBox="0 0 16 16"><ellipse cx="8" cy="8" rx="7" ry="3" fill="none" stroke="#206020" stroke-width="1.2"/><circle cx="8" cy="7.5" r="4.3" fill="#20b020"/><circle cx="7" cy="6.5" r="1.5" fill="#70e870"/><circle cx="11.5" cy="11" r="1.8" fill="#f0f080" stroke="#808020"/></svg><svg class="abs" style="left:564px;top:53px" width="16" height="16" viewBox="0 0 16 16"><path d="M3 5 Q3 3 5 4 L8 7 L7 3 Q8 1.5 9 3 L10 6 L11 4 L13 8 L12 13 H5 L2 9 Q2 7.5 4 8 L5 9Z" fill="#fff" stroke="#000"/><path d="M12 1 L14.5 3.5 L12 6 M9.5 3.5 L14.5 3.5 M12 1 L12 6" stroke="#000" fill="none"/></svg><svg class="abs" style="left:587px;top:53px" width="16" height="16" viewBox="0 0 16 16"><circle cx="6" cy="6" r="4.5" fill="#fff" stroke="#000" stroke-width="1.3"/><path d="M9.5 9.5 L14 14" stroke="#000" stroke-width="2.2"/><path d="M11 3 H15 M13 1 V5 M11 7 H15" stroke="#000"/></svg><svg class="abs" style="left:610px;top:53px" width="16" height="16" viewBox="0 0 16 16"><circle cx="7" cy="7" r="5.8" fill="#fff" stroke="#000" stroke-width="1.3"/><rect x="3.5" y="5" width="7" height="4.5" fill="none" stroke="#000"/><path d="M3.5 5 H10.5" stroke="#a00000"/><path d="M16 11 V16 H11 Z" fill="#000"/></svg><svg class="abs" style="left:633px;top:53px" width="16" height="16" viewBox="0 0 16 16"><circle cx="7" cy="7" r="5.8" fill="#fff" stroke="#000" stroke-width="1.3"/><path d="M11 11 L14.5 14.5" stroke="#000" stroke-width="2.2"/><path d="M9 3 L4 6 L7 7 L4 11 L10 7 L7 6Z" fill="#000"/></svg><svg class="abs" style="left:662px;top:53px" width="16" height="16" viewBox="0 0 16 16"><rect x="1.5" y="1.5" width="10" height="13" fill="#fff" stroke="#000"/><rect x="1.5" y="1.5" width="10" height="2" fill="#1a1a90"/><path d="M4 6 V12 M7 6 V12 M9.5 6 V12" stroke="#000" stroke-width="1.3" stroke-dasharray="1.5 1.2"/><path d="M12 5 L14.5 7 V10" fill="none" stroke="#1a1a90"/><rect x="13.5" y="11.5" width="1.5" height="2" fill="#1a1ae0"/></svg><svg class="abs" style="left:685px;top:53px" width="16" height="16" viewBox="0 0 16 16"><rect x="1" y="0.5" width="2.6" height="3" fill="#8020a0"/><rect x="3.6" y="0.5" width="2.6" height="3" fill="#2040e0"/><rect x="6.2" y="0.5" width="2.6" height="3" fill="#20a020"/><rect x="1" y="12.5" width="2.4" height="3" fill="#000"/><rect x="4" y="12.5" width="2.4" height="3" fill="#000"/><rect x="7" y="12.5" width="2.4" height="3" fill="#000"/><text x="1" y="11" font-family="Liberation Sans,sans-serif" font-weight="bold" font-size="8" fill="#000">A</text><path d="M7 8 L10 4 Q12 2 15 2.5 M8 6.5 Q11 9 15 6" fill="none" stroke="#000"/></svg><svg class="abs" style="left:713px;top:53px" width="16" height="16" viewBox="0 0 16 16"><text x="2.5" y="15" font-family="Liberation Sans,sans-serif" font-weight="bold" font-size="18" fill="#8a0a0a" stroke="#8a0a0a" stroke-width="0.5">?</text></svg><svg class="abs" style="left:737px;top:53px" width="16" height="16" viewBox="0 0 16 16"><rect x="0" y="0" width="16" height="16" fill="#c0c0c0"/><circle cx="5" cy="5" r="3" fill="none" stroke="#f0e000" stroke-width="2"/><path d="M7 8 L9 10" stroke="#f0e000" stroke-width="2"/><rect x="8.5" y="8.5" width="4" height="4" fill="none" stroke="#e00000" stroke-width="1.2"/><path d="M10.5 4 V16 M5 10.5 H16" stroke="#e00000" stroke-width="1.2"/></svg><svg class="abs" style="left:808px;top:53px" width="16" height="16" viewBox="0 0 16 16"><rect x="0" y="1" width="16" height="14" fill="#d8d8e0"/><text x="0.5" y="11.3" font-family="Liberation Sans,sans-serif" font-weight="bold" font-size="12.5" fill="#10107a" stroke="#10107a" stroke-width="0.7" textLength="13" lengthAdjust="spacingAndGlyphs" transform="scale(1 1.3)">HH</text><path d="M16 12 V16 H12 Z" fill="#000"/></svg><svg class="abs" style="left:831px;top:53px" width="16" height="16" viewBox="0 0 16 16"><rect x="0" y="1" width="16" height="14" fill="#dcdcd0"/><text x="0.5" y="11.3" font-family="Liberation Sans,sans-serif" font-weight="bold" font-size="12.5" fill="#107a10" stroke="#107a10" stroke-width="0.7" textLength="13" lengthAdjust="spacingAndGlyphs" transform="scale(1 1.3)">BB</text><path d="M16 12 V16 H12 Z" fill="#000"/></svg><svg class="abs" style="left:854px;top:53px" width="16" height="16" viewBox="0 0 16 16"><rect x="0" y="1" width="16" height="14" fill="#fff"/><text x="0.5" y="11.3" font-family="Liberation Sans,sans-serif" font-weight="bold" font-size="12.5" fill="#1818d0" stroke="#1818d0" stroke-width="0.7" textLength="13" lengthAdjust="spacingAndGlyphs" transform="scale(1 1.3)">PH</text><path d="M16 12 V16 H12 Z" fill="#000"/></svg><svg class="abs" style="left:877px;top:53px" width="16" height="16" viewBox="0 0 16 16"><rect x="0" y="1" width="16" height="14" fill="#c8c8d0"/><text x="0.5" y="11.3" font-family="Liberation Sans,sans-serif" font-weight="bold" font-size="12.5" fill="#10106a" stroke="#10106a" stroke-width="0.7" textLength="13" lengthAdjust="spacingAndGlyphs" transform="scale(1 1.3)">BP</text><path d="M16 12 V16 H12 Z" fill="#000"/></svg><svg class="abs" style="left:900px;top:53px" width="16" height="16" viewBox="0 0 16 16"><rect x="0" y="1" width="16" height="14" fill="#fff"/><text x="0.5" y="11.3" font-family="Liberation Sans,sans-serif" font-weight="bold" font-size="12.5" fill="#1818e0" stroke="#1818e0" stroke-width="0.7" textLength="13" lengthAdjust="spacingAndGlyphs" transform="scale(1 1.3)">PP</text><path d="M16 12 V16 H12 Z" fill="#000"/></svg><svg class="abs" style="left:923px;top:53px" width="16" height="16" viewBox="0 0 16 16"><text x="2.4" y="11.3" font-family="Liberation Sans,sans-serif" font-weight="bold" font-size="12.5" fill="#10107a" stroke="#10107a" stroke-width="0.7" transform="scale(0.82 1.3)">B</text><path d="M16 12 V16 H12 Z" fill="#000"/></svg><svg class="abs" style="left:946px;top:53px" width="16" height="16" viewBox="0 0 16 16"><text x="0.5" y="11.3" font-family="Liberation Sans,sans-serif" font-weight="bold" font-size="12.5" fill="#8a1010" stroke="#8a1010" stroke-width="0.7" textLength="13" lengthAdjust="spacingAndGlyphs" transform="scale(1 1.3)">SP</text><path d="M16 12 V16 H12 Z" fill="#000"/></svg><svg class="abs" style="left:969px;top:53px" width="16" height="16" viewBox="0 0 16 16"><rect x="0" y="1" width="16" height="14" fill="#d0f020"/><text x="0.5" y="11.3" font-family="Liberation Sans,sans-serif" font-weight="bold" font-size="12.5" fill="#108010" stroke="#108010" stroke-width="0.7" textLength="13" lengthAdjust="spacingAndGlyphs" transform="scale(1 1.3)">UD</text><path d="M16 12 V16 H12 Z" fill="#000"/></svg><svg class="abs" style="left:992px;top:53px" width="16" height="16" viewBox="0 0 16 16"><rect x="0" y="1" width="16" height="14" fill="#f8f020"/><text x="2.4" y="11.3" font-family="Liberation Sans,sans-serif" font-weight="bold" font-size="12.5" fill="#104010" stroke="#104010" stroke-width="0.7" transform="scale(0.82 1.3)">P</text><path d="M16 12 V16 H12 Z" fill="#000"/></svg><svg class="abs" style="left:1015px;top:53px" width="16" height="16" viewBox="0 0 16 16"><rect x="0" y="1" width="16" height="14" fill="#a0a068"/><text x="2.4" y="11.3" font-family="Liberation Sans,sans-serif" font-weight="bold" font-size="12.5" fill="#000" stroke="#000" stroke-width="0.7" transform="scale(0.82 1.3)">D</text><path d="M16 12 V16 H12 Z" fill="#000"/></svg><svg class="abs" style="left:1038px;top:53px" width="16" height="16" viewBox="0 0 16 16"><rect x="0" y="1" width="16" height="14" fill="#a0a068"/><text x="0.5" y="11.3" font-family="Liberation Sans,sans-serif" font-weight="bold" font-size="12.5" fill="#000" stroke="#000" stroke-width="0.7" textLength="13" lengthAdjust="spacingAndGlyphs" transform="scale(1 1.3)">DB</text><path d="M16 12 V16 H12 Z" fill="#000"/></svg><svg class="abs" style="left:1061px;top:53px" width="16" height="16" viewBox="0 0 16 16"><rect x="0" y="1" width="16" height="14" fill="#fff"/><text x="0.5" y="11.3" font-family="Liberation Sans,sans-serif" font-weight="bold" font-size="12.5" fill="#108010" stroke="#108010" stroke-width="0.7" textLength="13" lengthAdjust="spacingAndGlyphs" transform="scale(1 1.3)">OP</text><path d="M16 12 V16 H12 Z" fill="#000"/></svg><svg class="abs" style="left:1084px;top:53px" width="16" height="16" viewBox="0 0 16 16"><text x="0.5" y="11.3" font-family="Liberation Sans,sans-serif" font-weight="bold" font-size="12.5" fill="#108020" stroke="#108020" stroke-width="0.7" textLength="13" lengthAdjust="spacingAndGlyphs" transform="scale(1 1.3)">DP</text><path d="M16 12 V16 H12 Z" fill="#000"/></svg><svg class="abs" style="left:1107px;top:53px" width="16" height="16" viewBox="0 0 16 16"><text x="0.5" y="11.3" font-family="Liberation Sans,sans-serif" font-weight="bold" font-size="12.5" fill="#104890" stroke="#104890" stroke-width="0.7" textLength="13" lengthAdjust="spacingAndGlyphs" transform="scale(1 1.3)">CB</text><path d="M16 12 V16 H12 Z" fill="#000"/></svg><svg class="abs" style="left:1130px;top:53px" width="16" height="16" viewBox="0 0 16 16"><text x="0.5" y="11.3" font-family="Liberation Sans,sans-serif" font-weight="bold" font-size="12.5" fill="#103a90" stroke="#103a90" stroke-width="0.7" textLength="13" lengthAdjust="spacingAndGlyphs" transform="scale(1 1.3)">DD</text><path d="M16 12 V16 H12 Z" fill="#000"/></svg><svg class="abs" style="left:1153px;top:53px" width="16" height="16" viewBox="0 0 16 16"><rect x="0" y="1" width="16" height="14" fill="#c0c0c0"/><text x="0.5" y="11.3" font-family="Liberation Sans,sans-serif" font-weight="bold" font-size="12.5" fill="#108010" stroke="#108010" stroke-width="0.7" textLength="13" lengthAdjust="spacingAndGlyphs" transform="scale(1 1.3)">CC</text><path d="M16 12 V16 H12 Z" fill="#000"/></svg><svg class="abs" style="left:1176px;top:53px" width="16" height="16" viewBox="0 0 16 16"><rect x="0" y="1" width="16" height="14" fill="#b0d8a0"/><text x="0.5" y="11.3" font-family="Liberation Sans,sans-serif" font-weight="bold" font-size="12.5" fill="#108010" stroke="#108010" stroke-width="0.7" textLength="13" lengthAdjust="spacingAndGlyphs" transform="scale(1 1.3)">DC</text><path d="M16 12 V16 H12 Z" fill="#000"/></svg><svg class="abs" style="left:1199px;top:53px" width="16" height="16" viewBox="0 0 16 16"><text x="1.5" y="12.5" font-family="Noto Serif CJK SC,serif" font-weight="900" font-size="13" fill="#8a1010">成</text><path d="M16 12 V16 H12 Z" fill="#000"/></svg><svg class="abs" style="left:1222px;top:53px" width="16" height="16" viewBox="0 0 16 16"><text x="1.5" y="12.5" font-family="Noto Serif CJK SC,serif" font-weight="900" font-size="13" fill="#102040">全</text></svg><svg class="abs" style="left:16px;top:82px" width="16" height="16" viewBox="0 0 16 16"><path d="M1 11 L7 8 L15 11 L9 14Z" fill="#f0f020" stroke="#000" stroke-width="1.1"/><path d="M1 8 L7 5 L15 8 L9 11Z" fill="#fff" stroke="#000" stroke-width="1.1"/><path d="M1 5 L7 2 L15 5 L9 8Z" fill="#fff" stroke="#000" stroke-width="1.1"/><path d="M0 12 L3 15 H0Z" fill="#000"/></svg><svg class="abs" style="left:39px;top:82px" width="16" height="16" viewBox="0 0 16 16"><path d="M1 11 L7 8 L15 11 L9 14Z" fill="#fff" stroke="#000" stroke-width="1.1"/><path d="M1 8 L7 5 L15 8 L9 11Z" fill="#fff" stroke="#000" stroke-width="1.1"/><path d="M1 5 L7 2 L15 5 L9 8Z" fill="#fff" stroke="#000" stroke-width="1.1"/></svg><svg class="abs" style="left:343px;top:82px" width="16" height="16" viewBox="0 0 16 16"><path d="M1 3.5 H15" stroke="#000" stroke-width="1.6" stroke-dasharray="1.5 1"/><path d="M1 8 H15" stroke="#000" stroke-width="2"/><path d="M1 12.5 H15" stroke="#000" stroke-width="1.6" stroke-dasharray="2 1"/></svg><svg class="abs" style="left:366px;top:82px" width="16" height="16" viewBox="0 0 16 16"><rect x="1" y="0.5" width="2.6" height="3" fill="#8020a0"/><rect x="3.6" y="0.5" width="2.6" height="3" fill="#2040e0"/><rect x="6.2" y="0.5" width="2.6" height="3" fill="#20a020"/><rect x="1" y="12.5" width="2.4" height="3" fill="#000"/><rect x="4" y="12.5" width="2.4" height="3" fill="#000"/><rect x="7" y="12.5" width="2.4" height="3" fill="#000"/><text x="1" y="11" font-family="Liberation Sans,sans-serif" font-weight="bold" font-size="8" fill="#000">A</text><path d="M7 8 L10 4 Q12 2 15 2.5 M8 6.5 Q11 9 15 6" fill="none" stroke="#000"/></svg><svg class="abs" style="left:389px;top:82px" width="16" height="16" viewBox="0 0 16 16"><path d="M3 11 V6 Q3 2 7 2 Q11 2 11 6 V11 H8.5 V6 Q8.5 4.5 7 4.5 Q5.5 4.5 5.5 6 V11Z" fill="#8a0a0a"/><rect x="3" y="9.5" width="2.5" height="1.5" fill="#fff"/><rect x="8.5" y="9.5" width="2.5" height="1.5" fill="#fff"/><circle cx="13" cy="13" r="1.7" fill="#fff" stroke="#8a0a0a"/></svg><svg class="abs" style="left:412px;top:82px" width="16" height="16" viewBox="0 0 16 16"><path d="M3 11 V6 Q3 2 7 2 Q11 2 11 6 V11 H8.5 V6 Q8.5 4.5 7 4.5 Q5.5 4.5 5.5 6 V11Z" fill="#8a0a0a"/><rect x="3" y="9.5" width="2.5" height="1.5" fill="#f0e020"/><rect x="8.5" y="9.5" width="2.5" height="1.5" fill="#f0e020"/><circle cx="13.5" cy="8.5" r="1.7" fill="#d01010"/><path d="M1 13.5 H15" stroke="#1a1ac0" stroke-width="1.6"/></svg><svg class="abs" style="left:435px;top:82px" width="16" height="16" viewBox="0 0 16 16"><rect x="0" y="0" width="16" height="16" fill="#108a10"/><text x="1.5" y="13.2" font-family="Noto Sans CJK SC,sans-serif" font-weight="900" font-size="13" fill="#000" stroke="#fff" stroke-width="2" paint-order="stroke" style="paint-order:stroke">主</text></svg><svg class="abs" style="left:458px;top:82px" width="16" height="16" viewBox="0 0 16 16"><rect x="0" y="0" width="16" height="16" fill="#108a10"/><path d="M3 3 L13 13 M13 3 L3 13" stroke="#fff" stroke-width="4.4"/><path d="M3 3 L13 13 M13 3 L3 13" stroke="#000" stroke-width="2.2"/></svg><svg class="abs" style="left:481px;top:82px" width="16" height="16" viewBox="0 0 16 16"><path d="M5 1 H11 L15 5 V11 L11 15 H5 L1 11 V5Z" fill="#e81010" stroke="#600"/><path d="M4 6 H7 M9 6 H12 M5 11 Q8 13 11 11" stroke="#600" fill="none"/></svg><svg class="abs" style="left:504px;top:82px" width="16" height="16" viewBox="0 0 16 16"><rect x="0" y="0" width="16" height="16" fill="#fff"/><text x="0.5" y="7" font-family="Liberation Sans,sans-serif" font-weight="bold" font-size="8.5" fill="#7a1090">A</text><path d="M8 3 H12 L10 6" fill="none" stroke="#000" stroke-width="1.2"/><rect x="4.5" y="8.5" width="10" height="6" fill="#f0f040" stroke="#000"/><path d="M6.5 11.5 H8.5 M10.5 11.5 H12.5" stroke="#000" stroke-width="2"/></svg><svg class="abs" style="left:527px;top:82px" width="16" height="16" viewBox="0 0 16 16"><text x="0.5" y="7.5" font-family="Liberation Sans,sans-serif" font-weight="bold" font-size="9" fill="#7a1090">F</text><path d="M8 3 H12 L10 6" fill="none" stroke="#000" stroke-width="1.2"/><rect x="4.5" y="8.5" width="10" height="6" fill="#f0f040" stroke="#000"/><path d="M6.5 11.5 H8.5 M10.5 11.5 H12.5" stroke="#000" stroke-width="2"/></svg><svg class="abs" style="left:550px;top:82px" width="16" height="16" viewBox="0 0 16 16"><rect x="0" y="0" width="16" height="16" fill="#c8c8c8"/><path d="M2 7 L9 0.5 L12 3.5 L5 10Z" fill="#90a010" stroke="#000"/><path d="M2 7 L5 10 L7 8 L4 5Z" fill="#7a1090"/><path d="M5.5 3.8 L8.5 6.8" stroke="#fff" stroke-width="1.5"/><circle cx="10.5" cy="11" r="3.8" fill="#fff" stroke="#1a1ac0"/><path d="M10.5 11 L10.5 7.2 A3.8 3.8 0 0 1 14.3 11Z M10.5 11 L10.5 14.8 A3.8 3.8 0 0 1 6.7 11Z" fill="#d01010"/><path d="M10.5 11 L14.3 11 A3.8 3.8 0 0 1 10.5 14.8Z" fill="#1a1ac0"/></svg><svg class="abs" style="left:573px;top:82px" width="16" height="16" viewBox="0 0 16 16"><rect x="0" y="0" width="16" height="16" fill="#c8c8c8"/><path d="M2 7 L9 0.5 L12 3.5 L5 10Z" fill="#90a010" stroke="#000"/><path d="M2 7 L5 10 L7 8 L4 5Z" fill="#d01010"/><path d="M5.5 3.8 L8.5 6.8" stroke="#fff" stroke-width="1.5"/><ellipse cx="11" cy="11.5" rx="4" ry="3.3" fill="#fff" stroke="#1a1ac0" stroke-width="1.2"/><ellipse cx="11" cy="11.5" rx="2" ry="1.5" fill="none" stroke="#d01060"/><circle cx="3.5" cy="12.5" r="2" fill="none" stroke="#d01010" stroke-width="1.2"/></svg><svg class="abs" style="left:596px;top:82px" width="16" height="16" viewBox="0 0 16 16"><circle cx="4" cy="3.5" r="3" fill="#d06030" stroke="#7010a0" stroke-width="1.4"/><circle cx="12" cy="3.5" r="3" fill="#d06030" stroke="#7010a0" stroke-width="1.4"/><path d="M2 3.5 H6 M10 3.5 H14" stroke="#3040c0"/><path d="M8 6 V9 M4 8 H12" stroke="#20a020"/><text x="0" y="15.5" font-family="Liberation Sans,sans-serif" font-weight="bold" font-size="7.5" fill="#000" textLength="16" lengthAdjust="spacingAndGlyphs">MCD</text></svg><svg class="abs" style="left:619px;top:82px" width="16" height="16" viewBox="0 0 16 16"><rect x="0" y="1" width="16" height="15" fill="#c8c8c8"/><path d="M1 11 L7 8 L15 11 L9 14Z" fill="#d81818" stroke="#000" stroke-width="1.1"/><path d="M1 8 L7 5 L15 8 L9 11Z" fill="#d81818" stroke="#000" stroke-width="1.1"/><path d="M1 5 L7 2 L15 5 L9 8Z" fill="#d81818" stroke="#000" stroke-width="1.1"/><path d="M16 11 V16 H11Z" fill="#000"/><path d="M12 1 H15 M13.5 1 V4" stroke="#000"/></svg><svg class="abs" style="left:642px;top:82px" width="16" height="16" viewBox="0 0 16 16"><rect x="0" y="1" width="13" height="15" fill="#c8c8c8"/><path d="M1 11 L7 8 L15 11 L9 14Z" fill="#107a20" stroke="#000" stroke-width="1.1"/><path d="M1 8 L7 5 L15 8 L9 11Z" fill="#107a20" stroke="#000" stroke-width="1.1"/><path d="M1 5 L7 2 L15 5 L9 8Z" fill="#107a20" stroke="#000" stroke-width="1.1"/><path d="M13 1 V4 H15" stroke="#000" fill="none"/></svg><svg class="abs" style="left:665px;top:82px" width="16" height="16" viewBox="0 0 16 16"><rect x="1" y="0.5" width="14" height="15" fill="#fff"/><path d="M1.5 1 V13.5 H15 M14.5 1 V11" stroke="#1a1ac0" stroke-width="2" fill="none"/><text x="3" y="11" font-family="Noto Sans CJK SC,sans-serif" font-weight="700" font-size="10" fill="#1a1ac0">图</text><circle cx="14" cy="13.5" r="1.6" fill="#fff" stroke="#1a1ac0"/></svg><svg class="abs" style="left:688px;top:82px" width="16" height="16" viewBox="0 0 16 16"><rect x="0.5" y="0.5" width="15" height="15" fill="#2890f0"/><path d="M4 3 V10 H11 V6" stroke="#fff" stroke-width="2" fill="none"/><path d="M1 13 H15 M13 1 V13" stroke="#d0e8ff"/><circle cx="13.5" cy="13" r="1.6" fill="#fff" stroke="#1a1ac0"/></svg><svg class="abs" style="left:711px;top:82px" width="16" height="16" viewBox="0 0 16 16"><rect x="0.5" y="0.5" width="15" height="15" fill="#e01818"/><path d="M4 12 V6 L7.5 2.5 L11 6 V12 H8.5 V9 H6.5 V12Z" fill="#fff"/><rect x="6.5" y="5.5" width="2" height="2" fill="#e01818"/><path d="M1 13.5 H15 M13.5 1 V13" stroke="#ffd0d0"/><circle cx="13.5" cy="13.5" r="1.6" fill="#fff" stroke="#1a1ac0"/></svg><svg class="abs" style="left:734px;top:82px" width="16" height="16" viewBox="0 0 16 16"><path d="M1 3 H8" stroke="#1a1ac0" stroke-width="1.3"/><path d="M1 6 H15" stroke="#f0e020" stroke-width="2"/><path d="M1 8.5 H15" stroke="#000" stroke-width="1.3"/><path d="M1 11.5 H12" stroke="#f0e020" stroke-width="2"/><path d="M1 14 H11" stroke="#1a1ac0" stroke-width="1.3"/><path d="M1.8 0.30000000000000004 l2.4 2.4 m0 -2.4 l-2.4 2.4" stroke="#d01010" stroke-width="0.9"/><path d="M4.8 0.30000000000000004 l2.4 2.4 m0 -2.4 l-2.4 2.4" stroke="#d01010" stroke-width="0.9"/><path d="M1.8 4.8 l2.4 2.4 m0 -2.4 l-2.4 2.4" stroke="#d01010" stroke-width="0.9"/><path d="M4.8 4.8 l2.4 2.4 m0 -2.4 l-2.4 2.4" stroke="#d01010" stroke-width="0.9"/><path d="M7.8 4.8 l2.4 2.4 m0 -2.4 l-2.4 2.4" stroke="#d01010" stroke-width="0.9"/><path d="M10.8 4.8 l2.4 2.4 m0 -2.4 l-2.4 2.4" stroke="#d01010" stroke-width="0.9"/><path d="M1.8 10.3 l2.4 2.4 m0 -2.4 l-2.4 2.4" stroke="#d01010" stroke-width="0.9"/><path d="M4.8 10.3 l2.4 2.4 m0 -2.4 l-2.4 2.4" stroke="#d01010" stroke-width="0.9"/><path d="M7.8 10.3 l2.4 2.4 m0 -2.4 l-2.4 2.4" stroke="#d01010" stroke-width="0.9"/><path d="M16 11 V16 H11Z" fill="#000"/></svg><svg class="abs" style="left:757px;top:82px" width="16" height="16" viewBox="0 0 16 16"><text x="0.5" y="13.5" font-family="Noto Serif CJK SC,serif" font-weight="900" font-size="15" fill="#7a4810">高</text></svg><svg class="abs" style="left:780px;top:82px" width="16" height="16" viewBox="0 0 16 16"><text x="0.5" y="13.5" font-family="Noto Serif CJK SC,serif" font-weight="900" font-size="15" fill="#3010c0">型</text></svg><svg class="abs" style="left:803px;top:82px" width="16" height="16" viewBox="0 0 16 16"><text x="0.5" y="13.5" font-family="Noto Serif CJK SC,serif" font-weight="900" font-size="15" fill="#10107a">寬</text></svg><svg class="abs" style="left:825px;top:82px" width="16" height="16" viewBox="0 0 16 16"><text x="1.5" y="12.5" font-family="Noto Serif CJK SC,serif" font-weight="900" font-size="13" fill="#e01870">正</text></svg><svg class="abs" style="left:848px;top:82px" width="16" height="16" viewBox="0 0 16 16"><text x="1.5" y="12.5" font-family="Noto Serif CJK SC,serif" font-weight="900" font-size="13" fill="#3010d0">色</text></svg><svg class="abs" style="left:871px;top:82px" width="16" height="16" viewBox="0 0 16 16"><text x="0.5" y="13.5" font-family="Noto Serif CJK SC,serif" font-weight="900" font-size="15" fill="#000">基</text></svg><svg class="abs" style="left:894px;top:82px" width="16" height="16" viewBox="0 0 16 16"><rect x="0" y="1" width="16" height="15" fill="#c8c8c8"/><circle cx="2.5" cy="3" r="1.5" fill="none" stroke="#000"/><circle cx="9" cy="3" r="1.5" fill="none" stroke="#000"/><circle cx="2.5" cy="13" r="1.5" fill="none" stroke="#000"/><circle cx="9" cy="13" r="1.5" fill="none" stroke="#000"/><circle cx="13.5" cy="13" r="1.5" fill="none" stroke="#000"/><path d="M7 4 V10 M4.5 8 L7 10.5 L9.5 8" fill="none" stroke="#1a1ac0" stroke-width="1.4"/></svg><svg class="abs" style="left:917px;top:82px" width="16" height="16" viewBox="0 0 16 16"><rect x="0" y="1" width="16" height="15" fill="#c8c8c8"/><ellipse cx="4" cy="8.5" rx="2.5" ry="4" fill="#fff" stroke="#1a1ac0" stroke-width="1.3"/><path d="M8 6 H10 M9 5 V7 M8 11 H10" stroke="#000"/><circle cx="13" cy="5.5" r="1.8" fill="#7020e0"/><circle cx="13" cy="11.5" r="1.8" fill="#7020e0"/></svg><svg class="abs" style="left:940px;top:82px" width="16" height="16" viewBox="0 0 16 16"><rect x="0" y="3" width="13" height="13" fill="#c8c8c8"/><rect x="1" y="8" width="2" height="2" fill="#1a1ac0"/><rect x="1" y="11" width="2" height="4" fill="#1a1ac0"/><path d="M4 13 L10 6" stroke="#6060c0" stroke-dasharray="1.5 1"/><text x="9.5" y="5.5" font-family="Liberation Sans,sans-serif" font-weight="bold" font-size="7" fill="#000">m</text></svg><svg class="abs" style="left:62px;top:82px" width="16" height="16" viewBox="0 0 16 16"><path d="M8 1.5 Q12.5 1.5 12.5 6 Q12.5 8 10.5 10 V12 H5.5 V10 Q3.5 8 3.5 6 Q3.5 1.5 8 1.5Z" fill="#fff" stroke="#000"/><path d="M8 0 Q14 0 14 6 Q14 9 11 11 H5 Q2 9 2 6 Q2 0 8 0Z" fill="#f8f840" opacity="0.6"/><path d="M8 1.5 Q12.5 1.5 12.5 6 Q12.5 8 10.5 10 V12 H5.5 V10 Q3.5 8 3.5 6 Q3.5 1.5 8 1.5Z" fill="none" stroke="#000"/><path d="M6 13.5 H10 M6.5 15 H9.5" stroke="#000"/></svg><svg class="abs" style="left:78px;top:82px" width="16" height="16" viewBox="0 0 16 16"><rect x="1" y="1" width="14" height="14" fill="#f8f840"/><circle cx="8" cy="8" r="4" fill="#f8f840" stroke="#806000" stroke-width="1.2"/><path d="M2 2 L4.5 4.5 M14 2 L11.5 4.5 M2 14 L4.5 11.5 M14 14 L11.5 11.5" stroke="#404000" stroke-width="1.2"/></svg><svg class="abs" style="left:93px;top:82px" width="16" height="16" viewBox="0 0 16 16"><circle cx="6.5" cy="7" r="5" fill="#b0b0b0" stroke="#808080"/><path d="M6.5 1 V13 M0.5 7 H12.5" stroke="#909090" stroke-dasharray="1 1"/><rect x="7.5" y="8.5" width="7" height="6" fill="#e0e0e0" stroke="#808080"/></svg><svg class="abs" style="left:111px;top:82px" width="16" height="16" viewBox="0 0 16 16"><path d="M9 7 V4 Q9 1.5 11.5 1.5 Q14 1.5 14 4 V5" fill="none" stroke="#606000" stroke-width="1.6"/><rect x="2" y="7" width="9" height="8" fill="#b0b020"/><path d="M2 8 H11 M2 10 H11 M2 12 H11 M2 14 H11" stroke="#000" stroke-width="1"/></svg><div class="abs" style="left:128px;top:84px;width:11px;height:11px;border:1px solid #000;box-sizing:border-box;background:#fff"></div><svg class="abs" style="left:16px;top:111px" width="16" height="16" viewBox="0 0 16 16"><rect x="1" y="1" width="14" height="14" fill="#c8c8c8"/><path d="M3 1 V15 M1 13 H12 M3 5 H14" stroke="#a01010" stroke-width="1.2"/><path d="M3.5 5.5 H10 V9 H7 V12.5 H3.5Z" fill="#fff" stroke="#000"/><path d="M0.8 0.8 l2.4 2.4 m0 -2.4 l-2.4 2.4" stroke="#b020a0" stroke-width="0.9"/><path d="M3.8 0.8 l2.4 2.4 m0 -2.4 l-2.4 2.4" stroke="#b020a0" stroke-width="0.9"/><path d="M6.8 0.8 l2.4 2.4 m0 -2.4 l-2.4 2.4" stroke="#b020a0" stroke-width="0.9"/><path d="M11.8 3.8 l2.4 2.4 m0 -2.4 l-2.4 2.4" stroke="#b020a0" stroke-width="0.9"/><path d="M11.8 6.8 l2.4 2.4 m0 -2.4 l-2.4 2.4" stroke="#b020a0" stroke-width="0.9"/><path d="M11.8 9.8 l2.4 2.4 m0 -2.4 l-2.4 2.4" stroke="#b020a0" stroke-width="0.9"/><path d="M11.8 12.8 l2.4 2.4 m0 -2.4 l-2.4 2.4" stroke="#b020a0" stroke-width="0.9"/></svg><svg class="abs" style="left:39px;top:111px" width="16" height="16" viewBox="0 0 16 16"><rect x="1" y="1" width="14" height="14" fill="#c8c8c8"/><path d="M4 3 V6 L3 8 V13 H10 V8 L13 5 V3" fill="none" stroke="#000" stroke-width="1.2"/><rect x="3.5" y="9.5" width="6" height="3.5" fill="#f0e820" stroke="#000"/><path d="M2.8 0.8 l2.4 2.4 m0 -2.4 l-2.4 2.4" stroke="#b020a0" stroke-width="0.9"/><path d="M11.8 0.8 l2.4 2.4 m0 -2.4 l-2.4 2.4" stroke="#b020a0" stroke-width="0.9"/></svg><svg class="abs" style="left:62px;top:111px" width="16" height="16" viewBox="0 0 16 16"><rect x="1" y="1" width="14" height="14" fill="#c8c8c8"/><rect x="1.5" y="2.5" width="6" height="3" fill="#f0e820" stroke="#000"/><rect x="1.5" y="10.5" width="6" height="3" fill="#f0e820" stroke="#000"/><path d="M8 4 H10 L12 2 M8 12 H10 L12 9" stroke="#000" fill="none"/><path d="M3 8 H6 M4.5 6.5 V9.5" stroke="#1a1ac0" stroke-width="1.2"/><path d="M11.8 0.30000000000000004 l2.4 2.4 m0 -2.4 l-2.4 2.4" stroke="#b020a0" stroke-width="0.9"/><path d="M13.8 0.30000000000000004 l2.4 2.4 m0 -2.4 l-2.4 2.4" stroke="#b020a0" stroke-width="0.9"/><path d="M11.8 7.3 l2.4 2.4 m0 -2.4 l-2.4 2.4" stroke="#b020a0" stroke-width="0.9"/><path d="M13.8 7.3 l2.4 2.4 m0 -2.4 l-2.4 2.4" stroke="#b020a0" stroke-width="0.9"/></svg><svg class="abs" style="left:85px;top:111px" width="16" height="16" viewBox="0 0 16 16"><rect x="1" y="1" width="14" height="14" fill="#c8c8c8"/><rect x="1.5" y="2.5" width="7" height="3" fill="#fff" stroke="#000"/><rect x="1.5" y="10.5" width="7" height="3" fill="#fff" stroke="#000"/><path d="M9 4 H12 M9 12 H12 M9 8 H12" stroke="#000"/><path d="M3 8 H6 M4.5 6.5 V9.5" stroke="#1a1ac0" stroke-width="1.2"/><path d="M12.3 0.8 l2.4 2.4 m0 -2.4 l-2.4 2.4" stroke="#b020a0" stroke-width="0.9"/><path d="M12.3 3.8 l2.4 2.4 m0 -2.4 l-2.4 2.4" stroke="#b020a0" stroke-width="0.9"/><path d="M12.3 6.8 l2.4 2.4 m0 -2.4 l-2.4 2.4" stroke="#b020a0" stroke-width="0.9"/><path d="M12.3 9.8 l2.4 2.4 m0 -2.4 l-2.4 2.4" stroke="#b020a0" stroke-width="0.9"/><path d="M12.3 12.8 l2.4 2.4 m0 -2.4 l-2.4 2.4" stroke="#b020a0" stroke-width="0.9"/></svg><svg class="abs" style="left:108px;top:111px" width="16" height="16" viewBox="0 0 16 16"><rect x="1.5" y="1.5" width="13" height="13" fill="#fff" stroke="#000"/><path d="M1.5 6 H14.5 M1.5 10.5 H14.5 M6 1.5 V14.5 M10.5 1.5 V14.5" stroke="#000"/><path d="M6.999999999999999 2.5 l2.4 2.4 m0 -2.4 l-2.4 2.4" stroke="#a01010" stroke-width="0.9"/><path d="M11.3 2.5 l2.4 2.4 m0 -2.4 l-2.4 2.4" stroke="#a01010" stroke-width="0.9"/><path d="M2.5 6.999999999999999 l2.4 2.4 m0 -2.4 l-2.4 2.4" stroke="#a01010" stroke-width="0.9"/><path d="M6.999999999999999 6.999999999999999 l2.4 2.4 m0 -2.4 l-2.4 2.4" stroke="#a01010" stroke-width="0.9"/><path d="M11.3 6.999999999999999 l2.4 2.4 m0 -2.4 l-2.4 2.4" stroke="#a01010" stroke-width="0.9"/><path d="M2.5 11.3 l2.4 2.4 m0 -2.4 l-2.4 2.4" stroke="#a01010" stroke-width="0.9"/><path d="M6.999999999999999 11.3 l2.4 2.4 m0 -2.4 l-2.4 2.4" stroke="#a01010" stroke-width="0.9"/><path d="M11.3 11.3 l2.4 2.4 m0 -2.4 l-2.4 2.4" stroke="#a01010" stroke-width="0.9"/></svg><svg class="abs" style="left:131px;top:111px" width="16" height="16" viewBox="0 0 16 16"><rect x="1" y="1" width="14" height="14" fill="#c8c8c8"/><path d="M6 4 H15" stroke="#a01010" stroke-width="1.2"/><path d="M4 10 L8 5 M8 5 l0 2.5 M8 5 l-2.5 0.5" stroke="#e01010" stroke-width="1.2" fill="none"/><circle cx="4" cy="11.5" r="2.3" fill="#f0e020" stroke="#e01010" stroke-width="1.2"/><path d="M6.8 0.8 l2.4 2.4 m0 -2.4 l-2.4 2.4" stroke="#b020a0" stroke-width="0.9"/><path d="M9.8 0.8 l2.4 2.4 m0 -2.4 l-2.4 2.4" stroke="#b020a0" stroke-width="0.9"/><path d="M12.8 0.8 l2.4 2.4 m0 -2.4 l-2.4 2.4" stroke="#b020a0" stroke-width="0.9"/></svg><svg class="abs" style="left:154px;top:111px" width="16" height="16" viewBox="0 0 16 16"><rect x="1" y="1" width="14" height="14" fill="#c8c8c8"/><path d="M1 4.5 H15" stroke="#e08080" stroke-width="1.5"/><path d="M1.5 8.5 H5.5 V10.5 H10.5 V8.5 H14.5 V14 H1.5Z" fill="#f0e820" stroke="#000" stroke-width="1.2"/><path d="M1.5 8.5 V6 H14.5 V8.5" fill="none" stroke="#000"/><rect x="6" y="6.5" width="4" height="3" fill="#fff" stroke="#a01010" stroke-width="0.8"/><path d="M1.8 0.8 l2.4 2.4 m0 -2.4 l-2.4 2.4" stroke="#b020a0" stroke-width="0.9"/><path d="M5.8 0.8 l2.4 2.4 m0 -2.4 l-2.4 2.4" stroke="#b020a0" stroke-width="0.9"/><path d="M9.8 0.8 l2.4 2.4 m0 -2.4 l-2.4 2.4" stroke="#b020a0" stroke-width="0.9"/><path d="M12.8 0.8 l2.4 2.4 m0 -2.4 l-2.4 2.4" stroke="#b020a0" stroke-width="0.9"/></svg><svg class="abs" style="left:177px;top:111px" width="16" height="16" viewBox="0 0 16 16"><rect x="0" y="0" width="16" height="16" fill="#c8c8c8"/><path d="M3 11 L12 1 L15 3.5 L6 13.5Z" fill="#8a1090" stroke="#000" stroke-width="0.7"/><path d="M10.5 2.8 L12 1 L15 3.5 L13.5 5.5Z" fill="#b0c020"/><path d="M6 7.5 L9 10.5" stroke="#fff" stroke-width="1.6"/><path d="M0 11 L4 15 M4 11 L0 15 M5 15 L9 12" stroke="#1a1ac0" stroke-width="1"/><path d="M16 12 V16 H12Z" fill="#000"/></svg><svg class="abs" style="left:200px;top:111px" width="16" height="16" viewBox="0 0 16 16"><text x="0.5" y="13.5" font-family="Noto Serif CJK SC,serif" font-weight="900" font-size="15" fill="#7a4810">高</text><path d="M16 12 V16 H12 Z" fill="#000"/></svg><svg class="abs" style="left:223px;top:111px" width="16" height="16" viewBox="0 0 16 16"><rect x="0" y="0" width="12" height="10" fill="#c8c8c8"/><circle cx="5" cy="4" r="3.5" fill="#fff" stroke="#1a1ac0"/><path d="M5 4 L5 0.5 A3.5 3.5 0 0 0 1.5 4Z M5 4 L5 7.5 A3.5 3.5 0 0 0 8.5 4Z" fill="#d01010"/><ellipse cx="10.5" cy="11.5" rx="4.3" ry="3.5" fill="#f0e020" stroke="#e01010" stroke-width="1.2"/><rect x="8.5" y="0.5" width="2.5" height="2.5" fill="#000"/><rect x="12" y="5.5" width="2.5" height="2.5" fill="#000"/><path d="M1 9 V13 H4 M2.5 11.5 L4.5 13 L2.5 14.5" fill="none" stroke="#1a1ac0" stroke-width="1.2"/></svg><svg class="abs" style="left:246px;top:111px" width="16" height="16" viewBox="0 0 16 16"><rect x="0" y="0" width="12" height="10" fill="#c8c8c8"/><circle cx="4.5" cy="4" r="2.5" fill="#f0f0d0" stroke="#108010" stroke-width="1.2"/><ellipse cx="10.5" cy="11.5" rx="4.3" ry="3.5" fill="#f0e020" stroke="#e01010" stroke-width="1.2"/><rect x="12" y="5.5" width="2.5" height="2.5" fill="#000"/><path d="M1 9 V13 H4 M2.5 11.5 L4.5 13 L2.5 14.5" fill="none" stroke="#1a1ac0" stroke-width="1.2"/></svg><svg class="abs" style="left:269px;top:111px" width="16" height="16" viewBox="0 0 16 16"><circle cx="5" cy="4" r="3" fill="#e0f4ff" stroke="#1a70d0" stroke-width="1.2"/><circle cx="11" cy="11" r="3" fill="none" stroke="#e01010" stroke-width="1.1"/><path d="M11 6 V16 M6 11 H16" stroke="#1a1ac0" stroke-width="1.1"/><path d="M1 9 V13 H4 M2.5 11.5 L4.5 13 L2.5 14.5" fill="none" stroke="#1a1ac0" stroke-width="1.2"/></svg><svg class="abs" style="left:292px;top:111px" width="16" height="16" viewBox="0 0 16 16"><rect x="0" y="1" width="16" height="15" fill="#c8c8c8"/><rect x="1.5" y="3.5" width="13" height="3" fill="#f0a0a0" stroke="#a01010"/><rect x="1.5" y="7" width="13" height="7" fill="#f0e820" stroke="#000" stroke-width="1.4"/><path d="M4.8 0.30000000000000004 l2.4 2.4 m0 -2.4 l-2.4 2.4" stroke="#1a1ac0" stroke-width="0.9"/><path d="M7.8 0.30000000000000004 l2.4 2.4 m0 -2.4 l-2.4 2.4" stroke="#1a1ac0" stroke-width="0.9"/></svg><svg class="abs" style="left:315px;top:111px" width="16" height="16" viewBox="0 0 16 16"><rect x="0" y="0" width="16" height="16" fill="#c8c8c8" opacity="0.6"/><path d="M1.5 1 H9 L14.5 5.5 V15 H1.5Z" fill="#fff" stroke="#000" stroke-width="1.3"/><path d="M9 1 V5.5 H14.5" fill="none" stroke="#000"/><text x="2.2" y="13" font-family="Liberation Sans,sans-serif" font-weight="bold" font-size="6.5" fill="#1a1aa0" textLength="11.5" lengthAdjust="spacingAndGlyphs">LiFE</text></svg><svg class="abs" style="left:4px;top:146px" width="16" height="16" viewBox="0 0 16 16"><path d="M3 12 L12 3" stroke="#000" stroke-width="1.2"/><circle cx="3" cy="12" r="1.3" fill="#600"/><circle cx="12" cy="3" r="1.3" fill="#600"/><path d="M15 10 V14 H11Z" fill="#000"/></svg><svg class="abs" style="left:4px;top:167px" width="16" height="16" viewBox="0 0 16 16"><path d="M2 11 H11 Q14.5 11 14.5 8 Q14.5 5 11 5" fill="none" stroke="#000" stroke-width="1.2"/><circle cx="2.5" cy="11" r="1.2" fill="#600"/><circle cx="10" cy="11" r="1.2" fill="#600"/><circle cx="11" cy="4.5" r="1.2" fill="#600"/></svg><svg class="abs" style="left:4px;top:188px" width="16" height="16" viewBox="0 0 16 16"><rect x="2" y="3.5" width="12" height="8.5" fill="#fff" stroke="#000" stroke-width="1.2"/><circle cx="2" cy="12" r="1.2" fill="#600"/><circle cx="14" cy="3.5" r="1.2" fill="#600"/></svg><svg class="abs" style="left:4px;top:209px" width="16" height="16" viewBox="0 0 16 16"><path d="M2.5 12 Q3 4 12 2.5" fill="none" stroke="#000" stroke-width="1.3"/><circle cx="2.5" cy="12.5" r="1.6" fill="#a00000"/><circle cx="6" cy="5.5" r="1" fill="#600"/><circle cx="12.5" cy="2.5" r="1" fill="#600"/><path d="M15 11 V15 H11Z" fill="#000"/></svg><svg class="abs" style="left:4px;top:230px" width="16" height="16" viewBox="0 0 16 16"><circle cx="7.5" cy="7.5" r="5.8" fill="#fff" stroke="#000" stroke-width="1.2"/><path d="M7.5 7.5 L10.5 5" stroke="#000"/><circle cx="7.5" cy="7.5" r="1" fill="#a00000"/><path d="M15.5 11 V15 H11.5Z" fill="#000"/></svg><svg class="abs" style="left:4px;top:251px" width="16" height="16" viewBox="0 0 16 16"><rect x="3.5" y="3.5" width="8" height="8" fill="#d08080" stroke="#600"/><path d="M3.5 6 L6 3.5 M3.5 9 L9 3.5 M4 11.5 L11.5 4 M7 11.5 L11.5 7" stroke="#fff"/><path d="M1 3.5 H14 M1 11.5 H14 M3.5 1 V14 M11.5 1 V14" stroke="#600" stroke-width="1.1"/></svg><svg class="abs" style="left:4px;top:272px" width="16" height="16" viewBox="0 0 16 16"><path d="M3.5 12.5 L12.5 3.5" stroke="#000" stroke-width="1.2"/><circle cx="3" cy="13" r="1.6" fill="#fff" stroke="#800000"/><circle cx="13" cy="3" r="1.6" fill="#fff" stroke="#800000"/></svg><svg class="abs" style="left:4px;top:293px" width="16" height="16" viewBox="0 0 16 16"><path d="M2 13 L14 3" stroke="#000" stroke-width="1.2"/><circle cx="7" cy="9" r="1.6" fill="#fff" stroke="#800000"/></svg><svg class="abs" style="left:4px;top:315px" width="16" height="16" viewBox="0 0 16 16"><path d="M2 2 L14 14 M14 2 L2 14" stroke="#000" stroke-width="1.2"/><rect x="6.3" y="6.3" width="3.4" height="3.4" fill="#fff" stroke="#800000"/></svg><svg class="abs" style="left:4px;top:336px" width="16" height="16" viewBox="0 0 16 16"><circle cx="8" cy="8" r="6.3" fill="none" stroke="#000" stroke-width="1.3"/><circle cx="8" cy="8" r="1.4" fill="#fff" stroke="#800000"/></svg><svg class="abs" style="left:4px;top:357px" width="16" height="16" viewBox="0 0 16 16"><circle cx="8" cy="8" r="5.8" fill="none" stroke="#800000" stroke-width="1.2"/><circle cx="8" cy="2.2" r="1.4" fill="#fff" stroke="#800000"/><circle cx="8" cy="13.8" r="1.4" fill="#fff" stroke="#800000"/><circle cx="2.2" cy="8" r="1.4" fill="#fff" stroke="#800000"/><circle cx="13.8" cy="8" r="1.4" fill="#fff" stroke="#800000"/></svg><svg class="abs" style="left:4px;top:378px" width="16" height="16" viewBox="0 0 16 16"><circle cx="9" cy="9" r="5" fill="none" stroke="#000" stroke-width="1.3"/><path d="M1 9 L9 1" stroke="#000" stroke-width="1.2"/><circle cx="5" cy="5.5" r="1.5" fill="#fff" stroke="#800000"/></svg><svg class="abs" style="left:4px;top:399px" width="16" height="16" viewBox="0 0 16 16"><path d="M8 2 V11 M2 11.5 H14" stroke="#000" stroke-width="1.3"/><circle cx="8" cy="11.5" r="1.4" fill="#fff" stroke="#800000"/></svg><svg class="abs" style="left:4px;top:420px" width="16" height="16" viewBox="0 0 16 16"><rect x="3" y="2" width="8" height="7" fill="#f8f060" stroke="#000" stroke-width="1.2"/><circle cx="11" cy="10.5" r="3.6" fill="#f8f060" stroke="#000" stroke-width="1.2"/><circle cx="3" cy="9.5" r="1.4" fill="#fff" stroke="#800000"/><circle cx="8" cy="9" r="1.4" fill="#fff" stroke="#800000"/></svg><svg class="abs" style="left:4px;top:441px" width="16" height="16" viewBox="0 0 16 16"><circle cx="8" cy="8" r="1.5" fill="#fff" stroke="#800000"/></svg><svg class="abs" style="left:4px;top:462px" width="16" height="16" viewBox="0 0 16 16"><path d="M1 15 L12 4" stroke="#000" stroke-width="1.2"/><circle cx="11" cy="5" r="1.4" fill="#fff" stroke="#800000"/><circle cx="13" cy="9" r="1.4" fill="#fff" stroke="#808080"/></svg><svg class="abs" style="left:4px;top:532px" width="16" height="16" viewBox="0 0 16 16"><path d="M5 10 L12 2 L15 4.5 L8 12Z" fill="#8a1090" stroke="#000" stroke-width="0.6"/><path d="M10 4.5 L12 2 L15 4.5 L13 7Z" fill="#e8e020"/><path d="M1 13.5 H15" stroke="#000" stroke-width="1.3" stroke-dasharray="3 2 6 2"/></svg><svg class="abs" style="left:4px;top:553px" width="16" height="16" viewBox="0 0 16 16"><circle cx="4" cy="4" r="3" fill="#f8f020" stroke="#000"/><circle cx="10.5" cy="10.5" r="3" fill="#f8f020" stroke="#000"/><path d="M8 2 L12 6 M12 3 V6 H9" stroke="#000" fill="none"/><path d="M16 12 V16 H12Z" fill="#000"/></svg><svg class="abs" style="left:4px;top:574px" width="16" height="16" viewBox="0 0 16 16"><path d="M6 2 V13 H1.5Z" fill="#fff" stroke="#000"/><path d="M10 2 V13 H14.5Z" fill="#fff" stroke="#000"/><path d="M8 1 V15" stroke="#c01010" stroke-width="1.2"/></svg><svg class="abs" style="left:4px;top:595px" width="16" height="16" viewBox="0 0 16 16"><path d="M6 2 H10 V6.5 Q15 6.5 15 10 Q15 13 11 13 H5 Q1 13 1 10 Q1 6.5 6 6.5Z" fill="none" stroke="#a01010" stroke-width="1.2"/><path d="M7.5 4 V8.5 Q12 8.5 12.5 10 Q12 11.5 8 11.5 Q4 11.5 3.5 10 Q4 8.5 8.5 8.5 V4" fill="none" stroke="#a01010" stroke-width="0.9"/></svg><svg class="abs" style="left:4px;top:616px" width="16" height="16" viewBox="0 0 16 16"><rect x="1.5" y="1.5" width="5" height="5" fill="#fff" stroke="#000" stroke-width="1.2"/><rect x="9.5" y="1.5" width="5" height="5" fill="#fff" stroke="#000" stroke-width="1.2"/><rect x="1.5" y="9.5" width="5" height="5" fill="#fff" stroke="#000" stroke-width="1.2"/><rect x="9.5" y="9.5" width="5" height="5" fill="#fff" stroke="#000" stroke-width="1.2"/></svg><svg class="abs" style="left:4px;top:637px" width="16" height="16" viewBox="0 0 16 16"><path d="M8 1.5 V14.5 M1.5 8 H14.5" stroke="#000" stroke-width="1.3"/><path d="M6 3.5 L8 1 L10 3.5 M6 12.5 L8 15 L10 12.5 M3.5 6 L1 8 L3.5 10 M12.5 6 L15 8 L12.5 10" fill="none" stroke="#000" stroke-width="1.3"/></svg><svg class="abs" style="left:4px;top:658px" width="16" height="16" viewBox="0 0 16 16"><path d="M11.5 4 A5.2 5.2 0 1 1 5.5 3.5" fill="none" stroke="#000" stroke-width="2.2"/><path d="M4 1 L9 3 L5 7Z" fill="#000"/></svg><svg class="abs" style="left:4px;top:679px" width="16" height="16" viewBox="0 0 16 16"><rect x="2.5" y="1.5" width="12" height="12" fill="#fff" stroke="#a01010" stroke-width="1.1"/><path d="M2.5 7.5 H8.5 V13.5" fill="none" stroke="#000" stroke-width="1.2" stroke-dasharray="1.3 1.3"/></svg><svg class="abs" style="left:4px;top:700px" width="16" height="16" viewBox="0 0 16 16"><path d="M1.5 2.5 H9 L14 13.5 H1.5Z" fill="#fff" stroke="#000" stroke-width="1.2"/><path d="M9 2.5 V13.5" stroke="#a01010" stroke-dasharray="1.3 1.3"/></svg><svg class="abs" style="left:4px;top:721px" width="16" height="16" viewBox="0 0 16 16"><path d="M2.5 13 L13 2.5" stroke="#000" stroke-width="1.2" stroke-dasharray="3 1.5"/><circle cx="2.5" cy="13.5" r="1.5" fill="#000"/><circle cx="13.5" cy="2.5" r="1.3" fill="#000"/></svg><svg class="abs" style="left:4px;top:742px" width="16" height="16" viewBox="0 0 16 16"><path d="M10 1 L4 14" stroke="#000" stroke-width="1.4"/><path d="M1 8 H7" stroke="#000" stroke-width="2"/><path d="M8.5 8 H15" stroke="#c01010" stroke-width="1.6" stroke-dasharray="1.6 1.2"/></svg><svg class="abs" style="left:4px;top:763px" width="16" height="16" viewBox="0 0 16 16"><path d="M14 1 L8 14" stroke="#000" stroke-width="1.4"/><path d="M1 6 H6" stroke="#000" stroke-width="2"/><path d="M7 6 H12" stroke="#c01010" stroke-width="1.6" stroke-dasharray="1.6 1.2"/></svg><svg class="abs" style="left:4px;top:784px" width="16" height="16" viewBox="0 0 16 16"><path d="M5 4.5 H2 V13 H14.5 V4.5 H11.5" fill="#fff" stroke="#000" stroke-width="1.3"/><circle cx="5.5" cy="4.5" r="1.3" fill="#800000"/><circle cx="11.5" cy="4.5" r="1.3" fill="#800000"/></svg><svg class="abs" style="left:4px;top:805px" width="16" height="16" viewBox="0 0 16 16"><path d="M2.5 15 V9 Q3 4 8 2.5 H14" fill="none" stroke="#000" stroke-width="1.3"/><path d="M2.5 8 V2.5 H8" fill="none" stroke="#606060" stroke-dasharray="1.2 1.2"/></svg><svg class="abs" style="left:4px;top:826px" width="16" height="16" viewBox="0 0 16 16"><path d="M2.5 15 V9 Q2.5 2.5 9 2.5 H14" fill="none" stroke="#000" stroke-width="1.3"/><path d="M2.5 8 V2.5 H8" fill="none" stroke="#606060" stroke-dasharray="1.2 1.2"/></svg><svg class="abs" style="left:4px;top:847px" width="16" height="16" viewBox="0 0 16 16"><path d="M1 13 L8 6 L11 9 L4 16Z" fill="#c01818" stroke="#600" stroke-width="0.8" transform="translate(0 -1.5)"/><path d="M3 12 L9 6" stroke="#f08080" transform="translate(0 -1.5)"/><path d="M10.5 5.5 L12 4 M12 1 V3 M14 2 L12.8 3.2 M15 5 H13 M14.5 7 L13 6" stroke="#000" stroke-width="0.9"/></svg><svg class="abs" style="left:1259px;top:146px" width="16" height="16" viewBox="0 0 16 16"><ellipse cx="7" cy="10.5" rx="6.3" ry="3.8" fill="none" stroke="#d01010" stroke-width="1.2"/><path d="M4 14 L8.5 8" stroke="#d01010" stroke-width="1.6"/><path d="M8.5 8 L14 1" stroke="#1a1ad0" stroke-width="2.2"/></svg><svg class="abs" style="left:1259px;top:167px" width="16" height="16" viewBox="0 0 16 16"><path d="M5 1 L9.5 9 M11 1 L6.5 9" stroke="#000" stroke-width="1.3"/><path d="M2 5 L14 2.5" stroke="#c01010" stroke-width="0.9"/><circle cx="5" cy="12" r="2.2" fill="#f0e820" stroke="#000" stroke-width="1.2"/><circle cx="11" cy="12" r="2.2" fill="#f0e820" stroke="#000" stroke-width="1.2"/></svg><svg class="abs" style="left:1259px;top:188px" width="16" height="16" viewBox="0 0 16 16"><path d="M2 1.5 H14 L8 6.5Z" fill="#1a3ad0"/><rect x="1" y="7" width="14" height="7.5" fill="#f0f020" stroke="#108010" stroke-width="1.4"/></svg><svg class="abs" style="left:1259px;top:209px" width="16" height="16" viewBox="0 0 16 16"><text x="0" y="9" font-family="Liberation Sans,sans-serif" font-weight="bold" font-size="6" fill="#000">Y</text><text x="6" y="5" font-family="Liberation Sans,sans-serif" font-weight="bold" font-size="6" fill="#000">0</text><text x="12" y="5" font-family="Liberation Sans,sans-serif" font-weight="bold" font-size="6" fill="#000">X</text><text x="0" y="15" font-family="Liberation Sans,sans-serif" font-weight="bold" font-size="6" fill="#000">0</text><path d="M5 12.5 H15 M7.5 6 V15 M13.5 6 V9.5" stroke="#000" stroke-width="1.2"/><path d="M7.5 7.5 L13 12.5 H7.5Z" fill="#e01010"/></svg><svg class="abs" style="left:1259px;top:230px" width="16" height="16" viewBox="0 0 16 16"><circle cx="6.5" cy="9.5" r="5.5" fill="#fff" stroke="#1a1ac0" stroke-width="1.2"/><path d="M6.5 9.5 L6.5 4 A5.5 5.5 0 0 0 1 9.5Z M6.5 9.5 L6.5 15 A5.5 5.5 0 0 0 12 9.5Z" fill="#1a1ac0"/><path d="M2.5 5.5 L10.5 13.5" stroke="#e01010" stroke-width="1.6"/><text x="12" y="6" font-family="Liberation Sans,sans-serif" font-weight="bold" font-size="6.5" fill="#1a1ad0">A</text></svg><svg class="abs" style="left:1259px;top:251px" width="16" height="16" viewBox="0 0 16 16"><path d="M3 2 H11 V9 Q11 11 9 11 V13.5 H5.5 V9 H3Z" fill="#c0a0e0" stroke="#3010a0" stroke-width="1.2"/><path d="M4 6 L8 2.5 M4.5 9 L10.5 4 M7 11.5 L10.5 8" stroke="#fff" stroke-width="1.1"/><path d="M16 12 V16 H12Z" fill="#000"/></svg><svg class="abs" style="left:1259px;top:272px" width="16" height="16" viewBox="0 0 16 16"><rect x="2.5" y="2" width="4" height="12" rx="1.5" fill="#f0e020" stroke="#a04000" stroke-width="1.1"/><rect x="9.5" y="2" width="4" height="12" rx="1.5" fill="#f0e020" stroke="#a04000" stroke-width="1.1"/><path d="M4.5 3 V13 M11.5 3 V13" stroke="#a04000"/><path d="M0 8 H16" stroke="#e01010" stroke-width="1.2"/><path d="M16 12 V16 H12Z" fill="#000"/></svg><svg class="abs" style="left:1259px;top:293px" width="16" height="16" viewBox="0 0 16 16"><rect x="1" y="2.5" width="14" height="10" fill="#fff" stroke="#1a1ac0" stroke-width="1.5"/><path d="M3.5 5 h2 m-1 -1 v2 M10.5 5 h2 m-1 -1 v2 M3.5 10 h2 m-1 -1 v2 M10.5 10 h2 m-1 -1 v2" stroke="#c01030" stroke-width="1"/><path d="M16 12 V16 H12Z" fill="#000"/></svg><svg class="abs" style="left:1259px;top:315px" width="16" height="16" viewBox="0 0 16 16"><rect x="2" y="1.5" width="12" height="3" fill="#f0d020" stroke="#000"/><rect x="5.5" y="4.5" width="5" height="3" fill="#c03030" stroke="#000"/><rect x="4" y="7.5" width="8" height="3" fill="#f0d020" stroke="#000"/><rect x="2" y="10.5" width="12" height="3.5" fill="#f0d020" stroke="#000"/><path d="M8 4.5 V14" stroke="#000"/></svg><svg class="abs" style="left:1259px;top:336px" width="16" height="16" viewBox="0 0 16 16"><path d="M3 5 L5 1.5 L7 5 V14 H3Z" fill="#fff" stroke="#d01010" stroke-width="1.2"/><path d="M3 11 H7" stroke="#d01010"/><rect x="10" y="1.5" width="3" height="12.5" fill="#d8e820" stroke="#70a010" stroke-width="1.1"/></svg><svg class="abs" style="left:1259px;top:357px" width="16" height="16" viewBox="0 0 16 16"><rect x="2.5" y="1.5" width="10" height="13" rx="1" fill="#20c020" stroke="#000" stroke-width="1.4"/><rect x="4.5" y="3.5" width="6" height="2" fill="#60e060" stroke="#107010" stroke-width="0.6"/><path d="M5 8 H10 M5 10 H10 M5 12 H10" stroke="#107010" stroke-dasharray="1.3 0.8"/><path d="M16 12 V16 H12Z" fill="#000"/></svg><svg class="abs" style="left:1259px;top:378px" width="16" height="16" viewBox="0 0 16 16"><rect x="1" y="2" width="14" height="12" fill="#fff" stroke="#000" stroke-width="1.5"/><path d="M1 5.5 H15 M5.5 5.5 V14" stroke="#000" stroke-width="1.2"/><path d="M5.5 8.5 H15 M5.5 11 H15 M10 5.5 V14" stroke="#d09090" stroke-width="0.8"/></svg><svg class="abs" style="left:1259px;top:399px" width="16" height="16" viewBox="0 0 16 16"><rect x="2" y="2" width="13" height="13" fill="#70e8f0"/><path d="M2 2 H15 Q5 3 2 15Z" fill="#e01010"/><path d="M2.5 15 Q4 5 15 3.5" fill="none" stroke="#000" stroke-width="2.4"/></svg><svg class="abs" style="left:1259px;top:420px" width="16" height="16" viewBox="0 0 16 16"><circle cx="6.5" cy="10" r="5" fill="#fff" stroke="#1a1ac0" stroke-width="1.3"/><path d="M15 1.5 L10 6.5 M10 3 V6.5 H13.5" stroke="#e01010" stroke-width="1.6" fill="none"/></svg><svg class="abs" style="left:1259px;top:441px" width="16" height="16" viewBox="0 0 16 16"><circle cx="3.5" cy="4" r="2.3" fill="#6060d0" stroke="#1a1a90"/><circle cx="3.5" cy="9" r="1.5" fill="#6060d0"/><path d="M3.5 10 V15 M1.5 12 H5.5" stroke="#1a1a90" stroke-width="1.2"/><path d="M6 8 L12 2 L15 4 L10 9 L15 8 L15.5 14 H9Z" fill="#fff" stroke="#000"/><path d="M7.5 10 L11 6.5 M9 11.5 L12.5 8" stroke="#000"/></svg><svg class="abs" style="left:1259px;top:462px" width="16" height="16" viewBox="0 0 16 16"><rect x="1" y="0.5" width="14" height="4" fill="#d8d8d8"/><path d="M1 12 L6 9.5 H15 L10 15 H2Z" fill="#1a5ad0" stroke="#103080"/><rect x="6" y="11" width="3" height="2" fill="#fff"/><path d="M8 11 V2.5 M5 5.5 L8 2 L11 5.5" fill="none" stroke="#e01010" stroke-width="1.8"/></svg>
</div>
</body></html>
